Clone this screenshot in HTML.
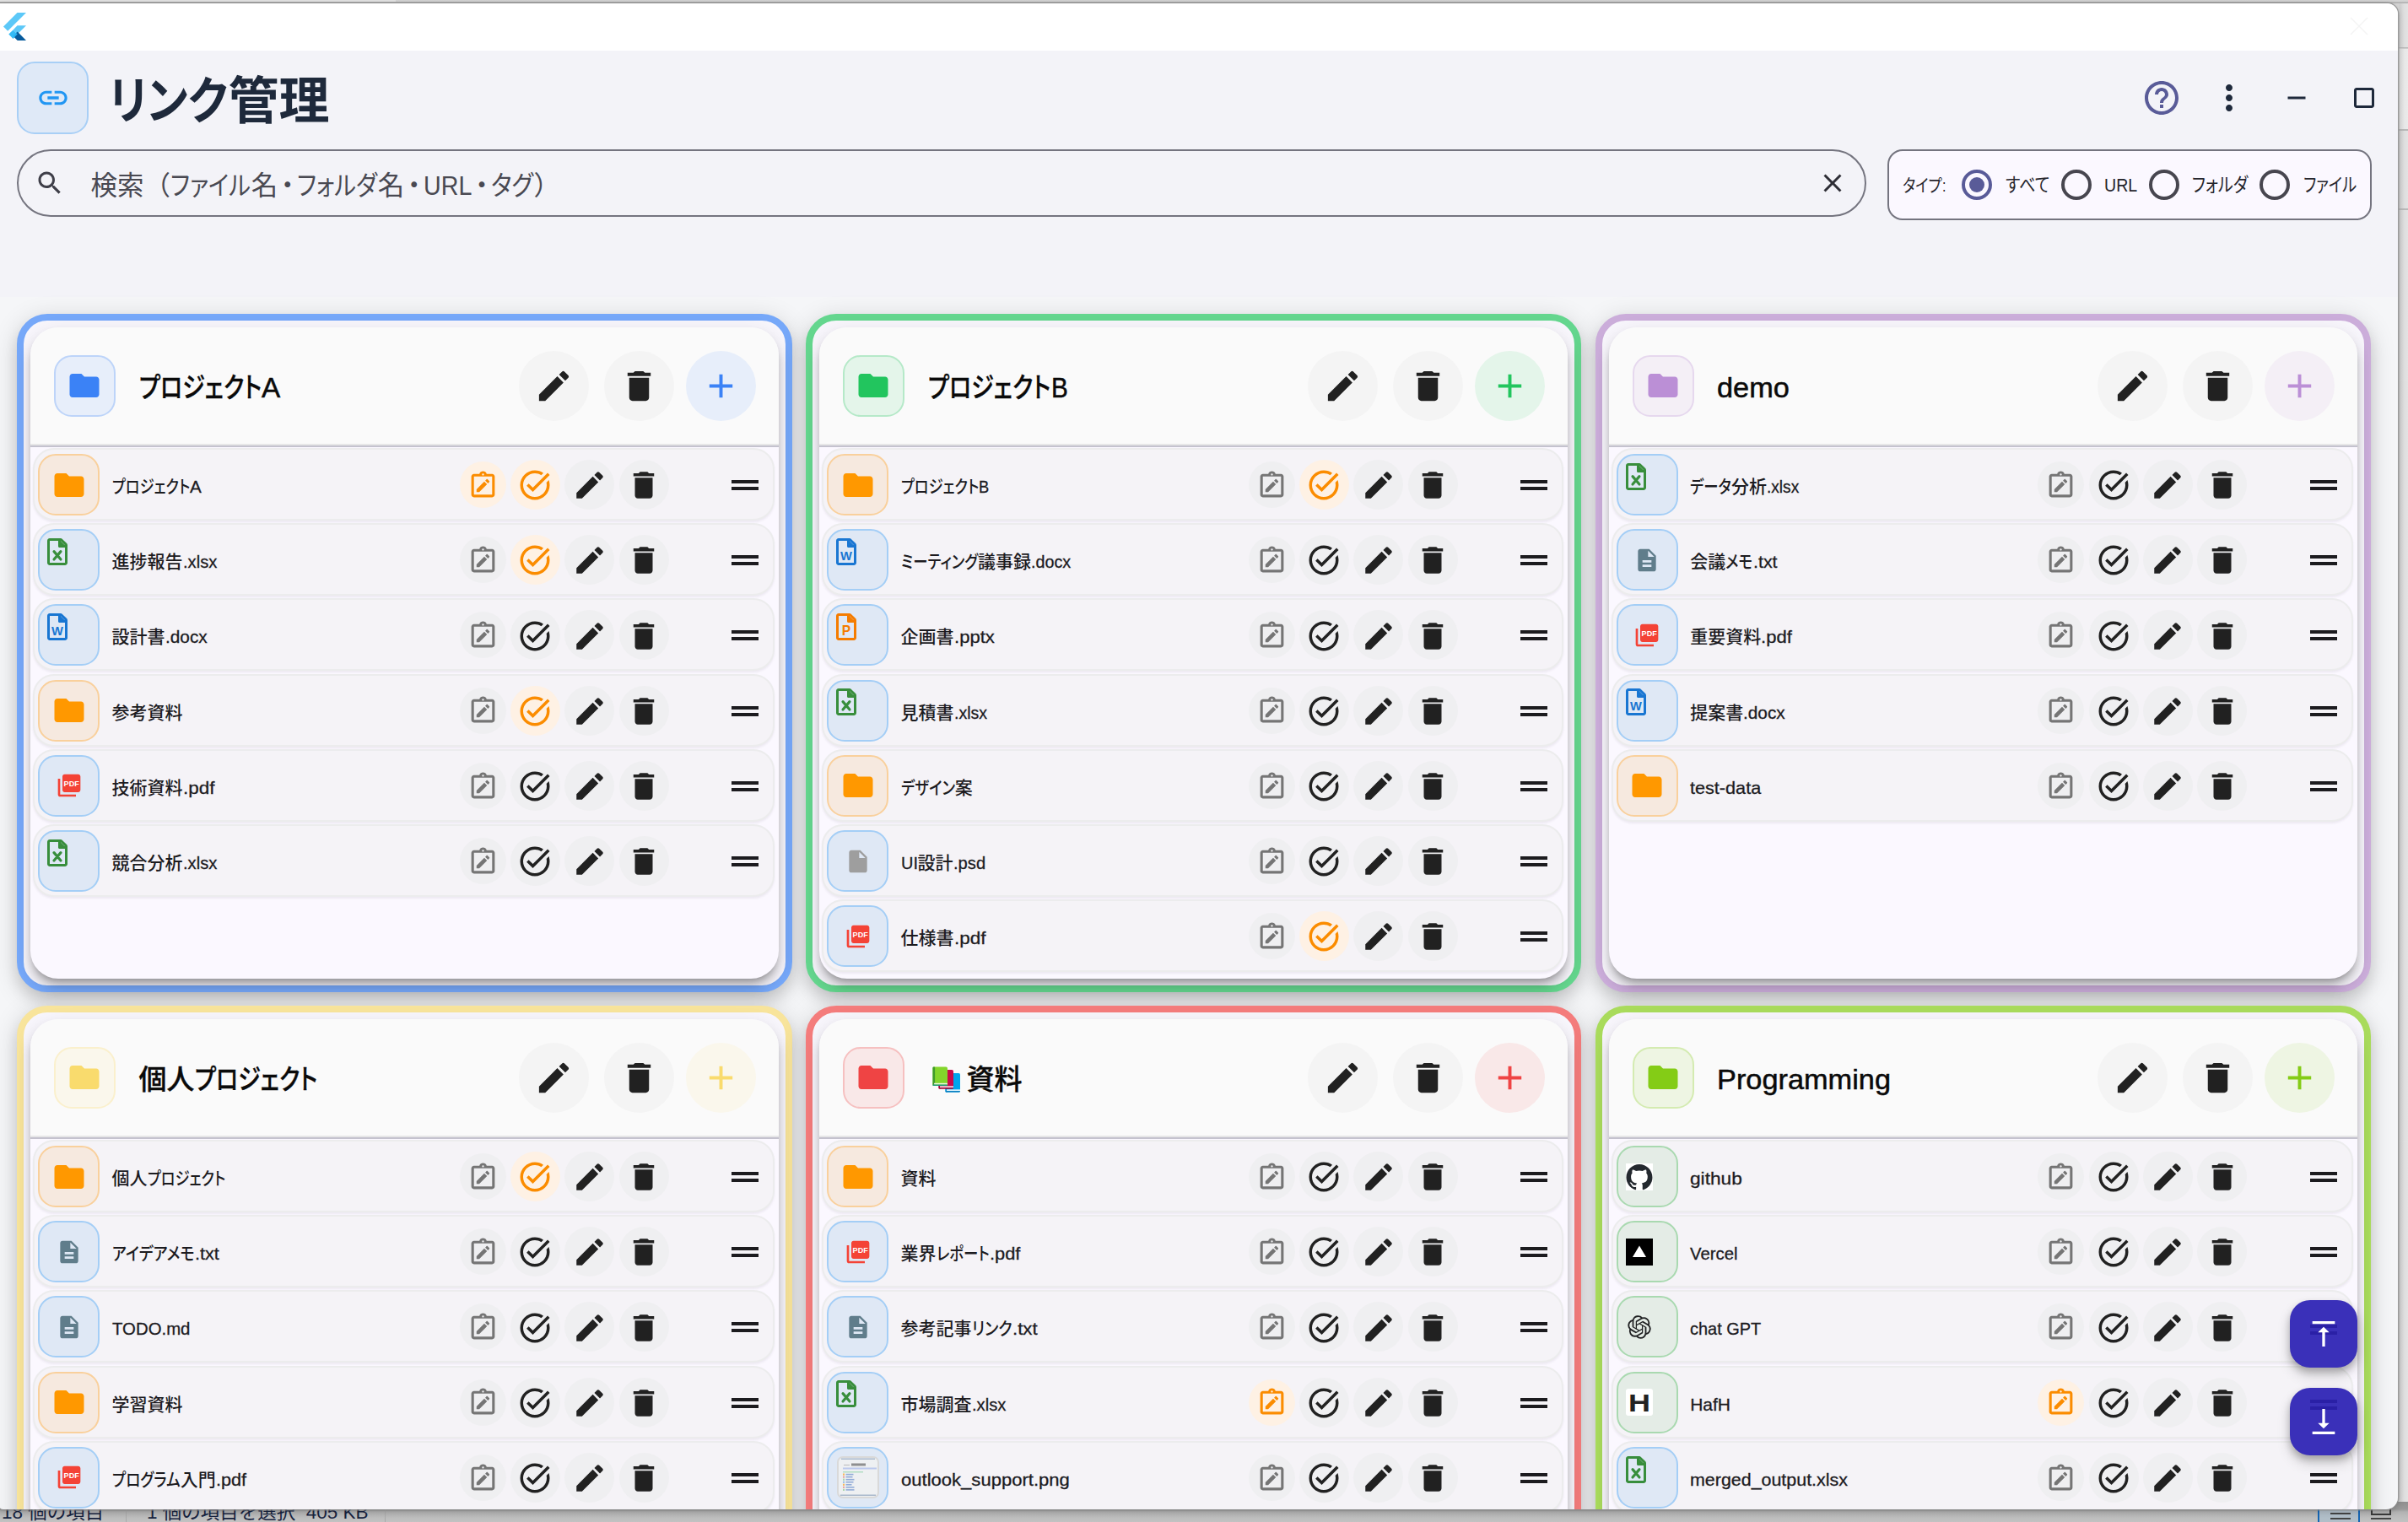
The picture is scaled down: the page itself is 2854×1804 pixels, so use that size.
<!DOCTYPE html><html lang="ja"><head><meta charset="utf-8"><title>リンク管理</title><style>
*{box-sizing:border-box;margin:0;padding:0}
html,body{width:2854px;height:1804px;overflow:hidden}
body{position:relative;background:#cfcfcf;font-family:"Liberation Sans","Noto Sans CJK JP",sans-serif;color:#1c1b1f}
.ab{position:absolute;display:block}
.k,.l{display:inline-block;transform-origin:0 50%;white-space:nowrap}
.k{font-feature-settings:"palt"}
.d{display:inline-block;text-align:center;font-feature-settings:"palt"}
#desk{position:absolute;left:0;top:0;width:2854px;height:1804px;background:linear-gradient(90deg,#d6d6d6 0,#d6d6d6 2843px,#cfcfcf 2844px,#dedede 2849px,#e3e3e3 2854px)}
#desk i{position:absolute;left:2843px;width:11px;height:1.5px;background:#b9b9b9}
#desk b{position:absolute;left:2843px;top:57px;width:11px;height:96px;background:rgba(255,255,255,.28)}
#desk .top{position:absolute;left:0;top:0;width:2854px;height:4px;background:linear-gradient(#d4d4d4 0,#d2d2d2 2px,#a8a8a8 3px,#b6b6b6 4px)}
#desk .top:before{content:"";position:absolute;left:0;top:0;width:469px;height:2.4px;background:#e3e3e3}
#sb{position:absolute;left:0;top:1780px;width:2854px;height:24px;background:linear-gradient(#8f8f8f 0,#9a9a9a 9px,#b2b2b2 12px,#bcbcbc 18px,#c2c2c2 24px);font-size:22.5px;line-height:24px;color:#17233f;white-space:nowrap}
#sb span{position:absolute;top:1px}
#sb i{position:absolute;top:0;width:1px;height:24px;background:#a9a9a9}
#win{position:absolute;left:-2px;top:3.5px;width:2844.2px;height:1785.5px;border-radius:0 13px 14px 6px;overflow:hidden;background:#f5f6f8;box-shadow:0 0 0 1.5px rgba(140,140,140,.75),0 2px 9px rgba(0,0,0,.2)}
#win>*{margin-left:2px}
#tb{position:absolute;left:0;top:0;width:2846px;height:56.5px;background:#fff}
#app{position:absolute;left:0;top:56.5px;width:2846px;height:292px;background:#f3f3f8}
#pg{position:absolute;left:0;top:-3.5px;width:2854px;height:1804px}
.lb{position:absolute;left:20px;top:73px;width:85px;height:86px;border-radius:21px;background:#dfe9f7;border:2px solid #a8cff6}
.tt{position:absolute;left:128.5px;top:78.5px;height:84px;line-height:84px;font-size:60px;font-weight:700;color:#1e293b;white-space:nowrap}
.sr{position:absolute;left:19.50px;top:177px;width:2192px;height:80px;border-radius:40px;border:2px solid #74747f}
.ph{position:absolute;left:107.5px;top:180.5px;height:78px;line-height:78px;font-size:31.50px;color:#494952;white-space:nowrap;font-weight:400}
.rg{position:absolute;left:2236.50px;top:177px;width:574px;height:84px;border-radius:18px;border:2px solid #74747f;background:#fbf8ff}
.rt{position:absolute;top:200px;height:40px;line-height:40px;font-size:22.50px;color:#25252c;white-space:nowrap}
.rd{position:absolute;top:201.30px;width:36px;height:36px;border-radius:50%;border:4px solid #47464f}
.rd.on{border-color:#595b98}
.rd.on:after{content:"";position:absolute;left:5px;top:5px;width:18px;height:18px;border-radius:50%;background:#595b98}
.card{position:absolute;width:919px;border:8px solid;border-radius:36px;background:#f8f6fc;box-shadow:0 6px 30px rgba(0,0,0,.155),0 11px 16px rgba(0,0,0,.10)}
.inner{position:absolute;left:8px;top:8px;width:887px;border-radius:33px;background:#fbf8ff;overflow:visible;box-shadow:0 7px 8px -4px rgba(0,0,0,.29),0 12px 15px 0 rgba(0,0,0,.15),0 4px 20px 2px rgba(0,0,0,.07)}
.hd{position:absolute;left:0;top:0;width:887px;height:140px;border-radius:33px 33px 0 0;background:#fafafa}
.dv{position:absolute;left:0;top:138px;width:887px;height:4px;background:linear-gradient(#eaeaea 0,#e4e4e5 40%,#c4c2ce 52%,#c4c2ce 88%,#e8e6ee 100%)}
.hb{position:absolute;width:73px;height:73px;border-radius:21px;border:2px solid}
.ht{position:absolute;height:60px;line-height:60px;font-size:33px;font-weight:500;color:#0a0a0a;-webkit-text-stroke:.35px #0a0a0a;white-space:nowrap}
.bk{display:inline-block;width:46px}
.ht .l{-webkit-text-stroke:.5px #0a0a0a}
.rl .l{-webkit-text-stroke:.3px #1c1b1f}
.cb{position:absolute;border-radius:50%}
.row{position:absolute;width:879px;height:86px;border-radius:25px;background:#f5f3f7;border:2px solid #ececed;box-shadow:0 2px 2.5px rgba(40,30,60,.065)}
.ib{position:absolute;width:73px;height:73px;border-radius:21px;border:2px solid}
.ib.fo{background:#f6e9df;border-color:#f9d09c}
.ib.fi{background:#dfe8f5;border-color:#a4cef6}
.ib.ur{background:#e4ece6;border-color:#a9d9b0}
.rl{position:absolute;height:86px;line-height:92px;font-size:21px;font-weight:500;color:#1c1b1f;white-space:nowrap}
.fab{position:absolute;left:2714px;width:80px;height:80px;border-radius:24px;background:#3a30b9;box-shadow:0 5px 8px rgba(0,0,0,.22),0 9px 16px rgba(0,0,0,.16)}
</style></head><body>
<div id="desk"><div class="top"></div><i style="top:56px"></i><i style="top:153px"></i><i style="top:247px"></i><b></b></div>
<div id="sb"><span style="left:2px">18 個の項目</span><i style="left:149px"></i><span style="left:174px">1 個の項目を選択&nbsp;&nbsp;405 KB</span><i style="left:456px"></i><b style="position:absolute;left:2747px;top:8px;width:50px;height:16px;background:#b1bec8;border-left:2px solid #1566b5;border-right:2px solid #1566b5"></b><b style="position:absolute;left:2762px;top:13px;width:24px;height:2px;background:#444"></b><b style="position:absolute;left:2762px;top:19px;width:24px;height:2px;background:#444"></b><b style="position:absolute;left:2810px;top:0;width:24px;height:16px;border:2.50px solid #3a3a3a;border-top:0"></b><b style="position:absolute;left:2810px;top:19px;width:24px;height:2px;background:#444"></b></div>
<div id="win"><div id="tb"></div><div id="app"></div><div id="pg">
<svg class="ab" style="left:4px;top:15px" width="27" height="33" viewBox="0 0 27 33"><path fill="#5cc8f8" d="M0 16.50L16.50 0H27L5.20 21.80z"/><path fill="#5cc8f8" d="M16.50 15.30H27L16.70 25.60l-5.20-5.20z"/><path fill="#075b9d" d="M11.50 27.70l5.20 5.30H27l-10.30-10.40z"/><path fill="#29b6f6" d="M11.50 20.40l5.20 5.20-5.20 5.30-5.20-5.30z" opacity=".95"/></svg>
<div class="lb"></div><svg class="ab" style="left:42.80px;top:96.00px;" width="40" height="40" viewBox="0 0 24 24"><path fill="#2196f3" d="M3.9 12c0-1.71 1.39-3.1 3.1-3.1h4V7H7c-2.76 0-5 2.24-5 5s2.24 5 5 5h4v-1.9H7c-1.71 0-3.1-1.39-3.1-3.1zM8 13h8v-2H8v2zm9-6h-4v1.9h4c1.71 0 3.1 1.39 3.1 3.1s-1.39 3.1-3.1 3.1h-4V17h4c2.76 0 5-2.24 5-5s-2.24-5-5-5z"/></svg>
<div class="tt"><span class="k" style="width:142.00px;transform:scaleX(0.88)">リンク</span>管理</div>
<svg class="ab" style="left:2538.00px;top:92.00px;" width="48" height="48" viewBox="0 0 24 24"><path fill="#595b98" d="M11 18h2v-2h-2v2zm1-16C6.48 2 2 6.48 2 12s4.48 10 10 10 10-4.48 10-10S17.52 2 12 2zm0 18c-4.41 0-8-3.59-8-8s3.59-8 8-8 8 3.59 8 8-3.59 8-8 8zm0-14c-2.21 0-4 1.79-4 4h2c0-1.1.9-2 2-2s2 .9 2 2c0 2-3 1.75-3 5h2c0-2.25 3-2.5 3-5 0-2.21-1.79-4-4-4z"/></svg><svg class="ab" style="left:2618.00px;top:92.00px;" width="48" height="48" viewBox="0 0 24 24"><path fill="#1e293b" d="M12 8c1.1 0 2-.9 2-2s-.9-2-2-2-2 .9-2 2 .9 2 2 2zm0 2c-1.1 0-2 .9-2 2s.9 2 2 2 2-.9 2-2-.9-2-2-2zm0 6c-1.1 0-2 .9-2 2s.9 2 2 2 2-.9 2-2-.9-2-2-2z"/></svg><svg class="ab" style="left:2704.20px;top:98.00px;" width="36" height="36" viewBox="0 0 24 24"><path fill="#1e293b" d="M19 13H5v-2h14v2z"/></svg><svg class="ab" style="left:2784.20px;top:98.00px;" width="36" height="36" viewBox="0 0 24 24"><path fill="#1e293b" d="M18 4H6c-1.1 0-2 .9-2 2v12c0 1.1.9 2 2 2h12c1.1 0 2-.9 2-2V6c0-1.1-.9-2-2-2zm0 14H6V6h12v12z"/></svg>
<svg class="ab" style="left:2785px;top:20px" width="22" height="22" viewBox="0 0 22 22"><path d="M1 1L21 21M21 1L1 21" stroke="#f4f4f4" stroke-width="1.50"/></svg>
<div class="sr"></div><svg class="ab" style="left:40.70px;top:198.70px;" width="36" height="36" viewBox="0 0 24 24"><path fill="#3e3e48" d="M15.5 14h-.79l-.28-.27C15.41 12.59 16 11.11 16 9.5 16 5.91 13.09 3 9.5 3S3 5.91 3 9.5 5.91 16 9.5 16c1.61 0 3.09-.59 4.23-1.57l.27.28v.79l5 4.99L20.49 19l-4.99-5zm-6 0C7.01 14 5 11.99 5 9.5S7.01 5 9.5 5 14 7.01 14 9.5 11.99 14 9.5 14z"/></svg><svg class="ab" style="left:2154.00px;top:198.70px;" width="36" height="36" viewBox="0 0 24 24"><path fill="#2e2e36" d="M19 6.41L17.59 5 12 10.59 6.41 5 5 6.41 10.59 12 5 17.59 6.41 19 12 13.41 17.59 19 19 17.59 13.41 12z"/></svg>
<div class="ph">検索（<span class="k" style="width:95.67px;transform:scaleX(0.87)">ファイル</span>名<span class="d" style="width:22.90px">・</span><span class="k" style="width:95.67px;transform:scaleX(0.87)">フォルダ</span>名<span class="d" style="width:22.90px">・</span><span class="l" style="width:57.43px;transform:scaleX(0.91)">URL</span><span class="d" style="width:22.90px">・</span><span class="k" style="width:50.04px;transform:scaleX(0.89)">タグ</span>）</div>
<div class="rg"></div>
<div class="rt" style="left:2255px;font-size:21px"><span class="k" style="width:47.05px;transform:scaleX(0.83)">タイプ</span><span class="l" style="width:4.45px;transform:scaleX(0.76)">:</span></div>
<div class="rd on" style="left:2325px"></div><div class="rt" style="left:2377px"><span class="k" style="width:52.50px;transform:scaleX(0.85)">すべて</span></div>
<div class="rd" style="left:2442.7px"></div><div class="rt" style="left:2494px"><span class="l" style="width:39.50px;transform:scaleX(0.87)">URL</span></div>
<div class="rd" style="left:2547px"></div><div class="rt" style="left:2598px"><span class="k" style="width:67.00px;transform:scaleX(0.85)">フォルダ</span></div>
<div class="rd" style="left:2678.3px"></div><div class="rt" style="left:2730px"><span class="k" style="width:63.50px;transform:scaleX(0.81)">ファイル</span></div>
<div class="card" style="left:20px;top:372px;height:804px;border-color:#76a8f9"><div class="inner" style="height:772px"><div class="hd"></div><div class="dv"></div></div></div>
<div class="hb" style="left:64px;top:420.5px;background:#e7eefa;border-color:#bdd4f9"></div>
<svg class="ab" style="left:79.30px;top:436.00px;" width="42" height="42" viewBox="0 0 24 24"><path fill="#3b82f6" d="M10 4H4c-1.1 0-1.99.9-1.99 2L2 18c0 1.1.9 2 2 2h16c1.1 0 2-.9 2-2V8c0-1.1-.9-2-2-2h-8l-2-2z"/></svg>
<div class="ht" style="left:164.5px;top:429.5px"><span class="k" style="width:145.55px;transform:scaleX(0.82)">プロジェクト</span><span class="l" style="width:22.45px;transform:scaleX(1.01)">A</span></div>
<div class="cb" style="left:615.1px;top:415.5px;width:83px;height:83px;background:#f4f4f4"></div>
<svg class="ab" style="left:633.10px;top:433.50px;" width="47" height="47" viewBox="0 0 24 24"><path fill="#212121" d="M3 17.25V21h3.75L17.81 9.94l-3.75-3.75L3 17.25zM20.71 7.04c.39-.39.39-1.02 0-1.41l-2.34-2.34c-.39-.39-1.02-.39-1.41 0l-1.83 1.83 3.75 3.75 1.83-1.83z"/></svg>
<div class="cb" style="left:716.1px;top:415.5px;width:83px;height:83px;background:#f4f4f4"></div>
<svg class="ab" style="left:734.10px;top:433.50px;" width="47" height="47" viewBox="0 0 24 24"><path fill="#212121" d="M6 19c0 1.1.9 2 2 2h8c1.1 0 2-.9 2-2V7H6v12zM19 4h-3.5l-1-1h-5l-1 1H5v2h14V4z"/></svg>
<div class="cb" style="left:812.8px;top:415.5px;width:83px;height:83px;background:#e7eefa"></div>
<svg class="ab" style="left:830.80px;top:433.50px;" width="47" height="47" viewBox="0 0 24 24"><path fill="#3b82f6" d="M19 13h-6v6h-2v-6H5v-2h6V5h2v6h6v2z"/></svg>
<div class="row" style="left:39px;top:531.0px"></div>
<div class="ib fo" style="left:45px;top:538.0px"></div>
<svg class="ab" style="left:60.50px;top:553.50px;" width="42" height="42" viewBox="0 0 24 24"><path fill="#ff9800" d="M10 4H4c-1.1 0-1.99.9-1.99 2L2 18c0 1.1.9 2 2 2h16c1.1 0 2-.9 2-2V8c0-1.1-.9-2-2-2h-8l-2-2z"/></svg>
<div class="rl" style="left:132.5px;top:531.0px"><span class="k" style="width:92.75px;transform:scaleX(0.82)">プロジェクト</span><span class="l" style="width:13.75px;transform:scaleX(0.98)">A</span></div>
<div class="cb" style="left:544.5px;top:546.9px;width:55px;height:55px;background:#fef1e4"></div>
<svg class="ab" style="left:553.50px;top:556.70px;" width="37" height="37" viewBox="0 0 24 24"><path fill="#fb8c00" d="M19 3h-4.18C14.40 1.84 13.30 1 12 1S9.60 1.84 9.18 3H5c-1.10 0-2 .900-2 2v14c0 1.10.900 2 2 2h14c1.10 0 2-.900 2-2V5c0-1.10-.900-2-2-2zm-7-.250c.410 0 .750.34.750.75s-.340.75-.750.75-.750-.340-.750-.750.34-.750.75-.750zM19 19H5V5h14v14zM15.08 11.03l-2.12-2.12L7 14.86V17h2.10l5.98-5.97zM16.85 9.27c.200-.200.20-.510 0-.710l-1.41-1.41c-.200-.200-.510-.200-.710 0l-1.06 1.06 2.12 2.12 1.06-1.06z"/></svg>
<div class="cb" style="left:604.8px;top:544.9px;width:59px;height:59px;background:#fef1e4"></div>
<svg class="ab" style="left:613.30px;top:554.20px;" width="42" height="42" viewBox="0 0 24 24"><path fill="#fb8c00" d="M22 5.18L10.59 16.6l-4.24-4.24 1.41-1.41 2.83 2.83 10-10L22 5.18zM19.79 10.22c.13.57.21 1.17.21 1.78 0 4.42-3.58 8-8 8s-8-3.58-8-8 3.58-8 8-8c1.58 0 3.04.46 4.28 1.25l1.44-1.44C16.1 2.67 14.13 2 12 2 6.48 2 2 6.48 2 12s4.48 10 10 10 10-4.48 10-10c0-1.19-.22-2.33-.6-3.39l-1.61 1.61z"/></svg>
<div class="cb" style="left:669.1px;top:544.9px;width:59px;height:59px;background:#efeff1"></div>
<svg class="ab" style="left:677.60px;top:554.20px;" width="42" height="42" viewBox="0 0 24 24"><path fill="#212121" d="M3 17.25V21h3.75L17.81 9.94l-3.75-3.75L3 17.25zM20.71 7.04c.39-.39.39-1.02 0-1.41l-2.34-2.34c-.39-.39-1.02-.39-1.41 0l-1.83 1.83 3.75 3.75 1.83-1.83z"/></svg>
<div class="cb" style="left:733.5px;top:544.9px;width:59px;height:59px;background:#efeff1"></div>
<svg class="ab" style="left:742.00px;top:554.20px;" width="42" height="42" viewBox="0 0 24 24"><path fill="#212121" d="M6 19c0 1.1.9 2 2 2h8c1.1 0 2-.9 2-2V7H6v12zM19 4h-3.5l-1-1h-5l-1 1H5v2h14V4z"/></svg>
<svg class="ab" style="left:859.00px;top:551.00px;" width="48" height="48" viewBox="0 0 24 24"><path fill="#1c1b1f" d="M20 9H4v2h16V9zM4 15h16v-2H4v2z"/></svg>
<div class="row" style="left:39px;top:620.2px"></div>
<div class="ib fi" style="left:45px;top:627.2px"></div>
<svg class="ab" style="left:56px;top:637.9px" width="24" height="32" viewBox="0 0 384 512"><path fill="#388e3c" d="M369.90 97.90L286 14C277 5 264.80-.100 252.10-.100H48C21.50 0 0 21.50 0 48v416c0 26.50 21.50 48 48 48h288c26.50 0 48-21.50 48-48V131.90c0-12.70-5.10-25-14.10-34zM332.10 128H256V51.90l76.10 76.10zM48 464V48h160v104c0 13.30 10.70 24 24 24h104v288H48z"/><path fill="#388e3c" d="M240 40L344 144H240z"/><path d="M128 250 L256 400 M256 250 L128 400" stroke="#388e3c" stroke-width="50" stroke-linecap="round" fill="none"/></svg>
<div class="rl" style="left:132.5px;top:620.2px">進捗報告<span class="l" style="width:40.50px;transform:scaleX(0.96)">.xlsx</span></div>
<div class="cb" style="left:544.5px;top:636.1px;width:55px;height:55px;background:#efeff1"></div>
<svg class="ab" style="left:553.50px;top:645.90px;" width="37" height="37" viewBox="0 0 24 24"><path fill="#757575" d="M19 3h-4.18C14.40 1.84 13.30 1 12 1S9.60 1.84 9.18 3H5c-1.10 0-2 .900-2 2v14c0 1.10.900 2 2 2h14c1.10 0 2-.900 2-2V5c0-1.10-.900-2-2-2zm-7-.250c.410 0 .750.34.750.75s-.340.75-.750.75-.750-.340-.750-.750.34-.750.75-.750zM19 19H5V5h14v14zM15.08 11.03l-2.12-2.12L7 14.86V17h2.10l5.98-5.97zM16.85 9.27c.200-.200.20-.510 0-.710l-1.41-1.41c-.200-.200-.510-.200-.710 0l-1.06 1.06 2.12 2.12 1.06-1.06z"/></svg>
<div class="cb" style="left:604.8px;top:634.1px;width:59px;height:59px;background:#fef1e4"></div>
<svg class="ab" style="left:613.30px;top:643.40px;" width="42" height="42" viewBox="0 0 24 24"><path fill="#fb8c00" d="M22 5.18L10.59 16.6l-4.24-4.24 1.41-1.41 2.83 2.83 10-10L22 5.18zM19.79 10.22c.13.57.21 1.17.21 1.78 0 4.42-3.58 8-8 8s-8-3.58-8-8 3.58-8 8-8c1.58 0 3.04.46 4.28 1.25l1.44-1.44C16.1 2.67 14.13 2 12 2 6.48 2 2 6.48 2 12s4.48 10 10 10 10-4.48 10-10c0-1.19-.22-2.33-.6-3.39l-1.61 1.61z"/></svg>
<div class="cb" style="left:669.1px;top:634.1px;width:59px;height:59px;background:#efeff1"></div>
<svg class="ab" style="left:677.60px;top:643.40px;" width="42" height="42" viewBox="0 0 24 24"><path fill="#212121" d="M3 17.25V21h3.75L17.81 9.94l-3.75-3.75L3 17.25zM20.71 7.04c.39-.39.39-1.02 0-1.41l-2.34-2.34c-.39-.39-1.02-.39-1.41 0l-1.83 1.83 3.75 3.75 1.83-1.83z"/></svg>
<div class="cb" style="left:733.5px;top:634.1px;width:59px;height:59px;background:#efeff1"></div>
<svg class="ab" style="left:742.00px;top:643.40px;" width="42" height="42" viewBox="0 0 24 24"><path fill="#212121" d="M6 19c0 1.1.9 2 2 2h8c1.1 0 2-.9 2-2V7H6v12zM19 4h-3.5l-1-1h-5l-1 1H5v2h14V4z"/></svg>
<svg class="ab" style="left:859.00px;top:640.20px;" width="48" height="48" viewBox="0 0 24 24"><path fill="#1c1b1f" d="M20 9H4v2h16V9zM4 15h16v-2H4v2z"/></svg>
<div class="row" style="left:39px;top:709.4px"></div>
<div class="ib fi" style="left:45px;top:716.4px"></div>
<svg class="ab" style="left:56px;top:727.1px" width="24" height="32" viewBox="0 0 384 512"><path fill="#1976d2" d="M369.90 97.90L286 14C277 5 264.80-.100 252.10-.100H48C21.50 0 0 21.50 0 48v416c0 26.50 21.50 48 48 48h288c26.50 0 48-21.50 48-48V131.90c0-12.70-5.10-25-14.10-34zM332.10 128H256V51.90l76.10 76.10zM48 464V48h160v104c0 13.30 10.70 24 24 24h104v288H48z"/><path fill="#1976d2" d="M240 40L344 144H240z"/><text x="192" y="408" text-anchor="middle" font-family="Liberation Sans, sans-serif" font-weight="bold" font-size="235" fill="#1976d2">W</text></svg>
<div class="rl" style="left:132.5px;top:709.4px">設計書<span class="l" style="width:50.20px;transform:scaleX(0.99)">.docx</span></div>
<div class="cb" style="left:544.5px;top:725.3px;width:55px;height:55px;background:#efeff1"></div>
<svg class="ab" style="left:553.50px;top:735.10px;" width="37" height="37" viewBox="0 0 24 24"><path fill="#757575" d="M19 3h-4.18C14.40 1.84 13.30 1 12 1S9.60 1.84 9.18 3H5c-1.10 0-2 .900-2 2v14c0 1.10.900 2 2 2h14c1.10 0 2-.900 2-2V5c0-1.10-.900-2-2-2zm-7-.250c.410 0 .750.34.750.75s-.340.75-.750.75-.750-.340-.750-.750.34-.750.75-.750zM19 19H5V5h14v14zM15.08 11.03l-2.12-2.12L7 14.86V17h2.10l5.98-5.97zM16.85 9.27c.200-.200.20-.510 0-.710l-1.41-1.41c-.200-.200-.510-.200-.710 0l-1.06 1.06 2.12 2.12 1.06-1.06z"/></svg>
<div class="cb" style="left:604.8px;top:723.3px;width:59px;height:59px;background:#efeff1"></div>
<svg class="ab" style="left:613.30px;top:732.60px;" width="42" height="42" viewBox="0 0 24 24"><path fill="#212121" d="M22 5.18L10.59 16.6l-4.24-4.24 1.41-1.41 2.83 2.83 10-10L22 5.18zM19.79 10.22c.13.57.21 1.17.21 1.78 0 4.42-3.58 8-8 8s-8-3.58-8-8 3.58-8 8-8c1.58 0 3.04.46 4.28 1.25l1.44-1.44C16.1 2.67 14.13 2 12 2 6.48 2 2 6.48 2 12s4.48 10 10 10 10-4.48 10-10c0-1.19-.22-2.33-.6-3.39l-1.61 1.61z"/></svg>
<div class="cb" style="left:669.1px;top:723.3px;width:59px;height:59px;background:#efeff1"></div>
<svg class="ab" style="left:677.60px;top:732.60px;" width="42" height="42" viewBox="0 0 24 24"><path fill="#212121" d="M3 17.25V21h3.75L17.81 9.94l-3.75-3.75L3 17.25zM20.71 7.04c.39-.39.39-1.02 0-1.41l-2.34-2.34c-.39-.39-1.02-.39-1.41 0l-1.83 1.83 3.75 3.75 1.83-1.83z"/></svg>
<div class="cb" style="left:733.5px;top:723.3px;width:59px;height:59px;background:#efeff1"></div>
<svg class="ab" style="left:742.00px;top:732.60px;" width="42" height="42" viewBox="0 0 24 24"><path fill="#212121" d="M6 19c0 1.1.9 2 2 2h8c1.1 0 2-.9 2-2V7H6v12zM19 4h-3.5l-1-1h-5l-1 1H5v2h14V4z"/></svg>
<svg class="ab" style="left:859.00px;top:729.40px;" width="48" height="48" viewBox="0 0 24 24"><path fill="#1c1b1f" d="M20 9H4v2h16V9zM4 15h16v-2H4v2z"/></svg>
<div class="row" style="left:39px;top:798.6px"></div>
<div class="ib fo" style="left:45px;top:805.6px"></div>
<svg class="ab" style="left:60.50px;top:821.10px;" width="42" height="42" viewBox="0 0 24 24"><path fill="#ff9800" d="M10 4H4c-1.1 0-1.99.9-1.99 2L2 18c0 1.1.9 2 2 2h16c1.1 0 2-.9 2-2V8c0-1.1-.9-2-2-2h-8l-2-2z"/></svg>
<div class="rl" style="left:132.5px;top:798.6px">参考資料</div>
<div class="cb" style="left:544.5px;top:814.5px;width:55px;height:55px;background:#efeff1"></div>
<svg class="ab" style="left:553.50px;top:824.30px;" width="37" height="37" viewBox="0 0 24 24"><path fill="#757575" d="M19 3h-4.18C14.40 1.84 13.30 1 12 1S9.60 1.84 9.18 3H5c-1.10 0-2 .900-2 2v14c0 1.10.900 2 2 2h14c1.10 0 2-.900 2-2V5c0-1.10-.900-2-2-2zm-7-.250c.410 0 .750.34.750.75s-.340.75-.750.75-.750-.340-.750-.750.34-.750.75-.750zM19 19H5V5h14v14zM15.08 11.03l-2.12-2.12L7 14.86V17h2.10l5.98-5.97zM16.85 9.27c.200-.200.20-.510 0-.710l-1.41-1.41c-.200-.200-.510-.200-.710 0l-1.06 1.06 2.12 2.12 1.06-1.06z"/></svg>
<div class="cb" style="left:604.8px;top:812.5px;width:59px;height:59px;background:#fef1e4"></div>
<svg class="ab" style="left:613.30px;top:821.80px;" width="42" height="42" viewBox="0 0 24 24"><path fill="#fb8c00" d="M22 5.18L10.59 16.6l-4.24-4.24 1.41-1.41 2.83 2.83 10-10L22 5.18zM19.79 10.22c.13.57.21 1.17.21 1.78 0 4.42-3.58 8-8 8s-8-3.58-8-8 3.58-8 8-8c1.58 0 3.04.46 4.28 1.25l1.44-1.44C16.1 2.67 14.13 2 12 2 6.48 2 2 6.48 2 12s4.48 10 10 10 10-4.48 10-10c0-1.19-.22-2.33-.6-3.39l-1.61 1.61z"/></svg>
<div class="cb" style="left:669.1px;top:812.5px;width:59px;height:59px;background:#efeff1"></div>
<svg class="ab" style="left:677.60px;top:821.80px;" width="42" height="42" viewBox="0 0 24 24"><path fill="#212121" d="M3 17.25V21h3.75L17.81 9.94l-3.75-3.75L3 17.25zM20.71 7.04c.39-.39.39-1.02 0-1.41l-2.34-2.34c-.39-.39-1.02-.39-1.41 0l-1.83 1.83 3.75 3.75 1.83-1.83z"/></svg>
<div class="cb" style="left:733.5px;top:812.5px;width:59px;height:59px;background:#efeff1"></div>
<svg class="ab" style="left:742.00px;top:821.80px;" width="42" height="42" viewBox="0 0 24 24"><path fill="#212121" d="M6 19c0 1.1.9 2 2 2h8c1.1 0 2-.9 2-2V7H6v12zM19 4h-3.5l-1-1h-5l-1 1H5v2h14V4z"/></svg>
<svg class="ab" style="left:859.00px;top:818.60px;" width="48" height="48" viewBox="0 0 24 24"><path fill="#1c1b1f" d="M20 9H4v2h16V9zM4 15h16v-2H4v2z"/></svg>
<div class="row" style="left:39px;top:887.8px"></div>
<div class="ib fi" style="left:45px;top:894.8px"></div>
<svg class="ab" style="left:65.5px;top:915.3px" width="32" height="32" viewBox="0 0 24 24"><path fill="#f44336" d="M20 2H8c-1.10 0-2 .900-2 2v12c0 1.10.900 2 2 2h12c1.10 0 2-.900 2-2V4c0-1.10-.900-2-2-2zM4 6H2v14c0 1.10.900 2 2 2h14v-2H4V6z"/><text x="14" y="13" text-anchor="middle" font-family="Liberation Sans, sans-serif" font-weight="bold" font-size="7.2" fill="#fff" textLength="13.6" lengthAdjust="spacingAndGlyphs">PDF</text></svg>
<div class="rl" style="left:132.5px;top:887.8px">技術資料<span class="l" style="width:37.50px;transform:scaleX(1.07)">.pdf</span></div>
<div class="cb" style="left:544.5px;top:903.7px;width:55px;height:55px;background:#efeff1"></div>
<svg class="ab" style="left:553.50px;top:913.50px;" width="37" height="37" viewBox="0 0 24 24"><path fill="#757575" d="M19 3h-4.18C14.40 1.84 13.30 1 12 1S9.60 1.84 9.18 3H5c-1.10 0-2 .900-2 2v14c0 1.10.900 2 2 2h14c1.10 0 2-.900 2-2V5c0-1.10-.900-2-2-2zm-7-.250c.410 0 .750.34.750.75s-.340.75-.750.75-.750-.340-.750-.750.34-.750.75-.750zM19 19H5V5h14v14zM15.08 11.03l-2.12-2.12L7 14.86V17h2.10l5.98-5.97zM16.85 9.27c.200-.200.20-.510 0-.710l-1.41-1.41c-.200-.200-.510-.200-.710 0l-1.06 1.06 2.12 2.12 1.06-1.06z"/></svg>
<div class="cb" style="left:604.8px;top:901.7px;width:59px;height:59px;background:#efeff1"></div>
<svg class="ab" style="left:613.30px;top:911.00px;" width="42" height="42" viewBox="0 0 24 24"><path fill="#212121" d="M22 5.18L10.59 16.6l-4.24-4.24 1.41-1.41 2.83 2.83 10-10L22 5.18zM19.79 10.22c.13.57.21 1.17.21 1.78 0 4.42-3.58 8-8 8s-8-3.58-8-8 3.58-8 8-8c1.58 0 3.04.46 4.28 1.25l1.44-1.44C16.1 2.67 14.13 2 12 2 6.48 2 2 6.48 2 12s4.48 10 10 10 10-4.48 10-10c0-1.19-.22-2.33-.6-3.39l-1.61 1.61z"/></svg>
<div class="cb" style="left:669.1px;top:901.7px;width:59px;height:59px;background:#efeff1"></div>
<svg class="ab" style="left:677.60px;top:911.00px;" width="42" height="42" viewBox="0 0 24 24"><path fill="#212121" d="M3 17.25V21h3.75L17.81 9.94l-3.75-3.75L3 17.25zM20.71 7.04c.39-.39.39-1.02 0-1.41l-2.34-2.34c-.39-.39-1.02-.39-1.41 0l-1.83 1.83 3.75 3.75 1.83-1.83z"/></svg>
<div class="cb" style="left:733.5px;top:901.7px;width:59px;height:59px;background:#efeff1"></div>
<svg class="ab" style="left:742.00px;top:911.00px;" width="42" height="42" viewBox="0 0 24 24"><path fill="#212121" d="M6 19c0 1.1.9 2 2 2h8c1.1 0 2-.9 2-2V7H6v12zM19 4h-3.5l-1-1h-5l-1 1H5v2h14V4z"/></svg>
<svg class="ab" style="left:859.00px;top:907.80px;" width="48" height="48" viewBox="0 0 24 24"><path fill="#1c1b1f" d="M20 9H4v2h16V9zM4 15h16v-2H4v2z"/></svg>
<div class="row" style="left:39px;top:977.0px"></div>
<div class="ib fi" style="left:45px;top:984.0px"></div>
<svg class="ab" style="left:56px;top:994.7px" width="24" height="32" viewBox="0 0 384 512"><path fill="#388e3c" d="M369.90 97.90L286 14C277 5 264.80-.100 252.10-.100H48C21.50 0 0 21.50 0 48v416c0 26.50 21.50 48 48 48h288c26.50 0 48-21.50 48-48V131.90c0-12.70-5.10-25-14.10-34zM332.10 128H256V51.90l76.10 76.10zM48 464V48h160v104c0 13.30 10.70 24 24 24h104v288H48z"/><path fill="#388e3c" d="M240 40L344 144H240z"/><path d="M128 250 L256 400 M256 250 L128 400" stroke="#388e3c" stroke-width="50" stroke-linecap="round" fill="none"/></svg>
<div class="rl" style="left:132.5px;top:977.0px">競合分析<span class="l" style="width:40.50px;transform:scaleX(0.96)">.xlsx</span></div>
<div class="cb" style="left:544.5px;top:992.9px;width:55px;height:55px;background:#efeff1"></div>
<svg class="ab" style="left:553.50px;top:1002.70px;" width="37" height="37" viewBox="0 0 24 24"><path fill="#757575" d="M19 3h-4.18C14.40 1.84 13.30 1 12 1S9.60 1.84 9.18 3H5c-1.10 0-2 .900-2 2v14c0 1.10.900 2 2 2h14c1.10 0 2-.900 2-2V5c0-1.10-.900-2-2-2zm-7-.250c.410 0 .750.34.750.75s-.340.75-.750.75-.750-.340-.750-.750.34-.750.75-.750zM19 19H5V5h14v14zM15.08 11.03l-2.12-2.12L7 14.86V17h2.10l5.98-5.97zM16.85 9.27c.200-.200.20-.510 0-.710l-1.41-1.41c-.200-.200-.510-.200-.710 0l-1.06 1.06 2.12 2.12 1.06-1.06z"/></svg>
<div class="cb" style="left:604.8px;top:990.9px;width:59px;height:59px;background:#efeff1"></div>
<svg class="ab" style="left:613.30px;top:1000.20px;" width="42" height="42" viewBox="0 0 24 24"><path fill="#212121" d="M22 5.18L10.59 16.6l-4.24-4.24 1.41-1.41 2.83 2.83 10-10L22 5.18zM19.79 10.22c.13.57.21 1.17.21 1.78 0 4.42-3.58 8-8 8s-8-3.58-8-8 3.58-8 8-8c1.58 0 3.04.46 4.28 1.25l1.44-1.44C16.1 2.67 14.13 2 12 2 6.48 2 2 6.48 2 12s4.48 10 10 10 10-4.48 10-10c0-1.19-.22-2.33-.6-3.39l-1.61 1.61z"/></svg>
<div class="cb" style="left:669.1px;top:990.9px;width:59px;height:59px;background:#efeff1"></div>
<svg class="ab" style="left:677.60px;top:1000.20px;" width="42" height="42" viewBox="0 0 24 24"><path fill="#212121" d="M3 17.25V21h3.75L17.81 9.94l-3.75-3.75L3 17.25zM20.71 7.04c.39-.39.39-1.02 0-1.41l-2.34-2.34c-.39-.39-1.02-.39-1.41 0l-1.83 1.83 3.75 3.75 1.83-1.83z"/></svg>
<div class="cb" style="left:733.5px;top:990.9px;width:59px;height:59px;background:#efeff1"></div>
<svg class="ab" style="left:742.00px;top:1000.20px;" width="42" height="42" viewBox="0 0 24 24"><path fill="#212121" d="M6 19c0 1.1.9 2 2 2h8c1.1 0 2-.9 2-2V7H6v12zM19 4h-3.5l-1-1h-5l-1 1H5v2h14V4z"/></svg>
<svg class="ab" style="left:859.00px;top:997.00px;" width="48" height="48" viewBox="0 0 24 24"><path fill="#1c1b1f" d="M20 9H4v2h16V9zM4 15h16v-2H4v2z"/></svg>
<div class="card" style="left:955px;top:372px;height:804px;border-color:#64d68e"><div class="inner" style="height:772px"><div class="hd"></div><div class="dv"></div></div></div>
<div class="hb" style="left:999px;top:420.5px;background:#e4f5ea;border-color:#b5e9c8"></div>
<svg class="ab" style="left:1014.30px;top:436.00px;" width="42" height="42" viewBox="0 0 24 24"><path fill="#22c55e" d="M10 4H4c-1.1 0-1.99.9-1.99 2L2 18c0 1.1.9 2 2 2h16c1.1 0 2-.9 2-2V8c0-1.1-.9-2-2-2h-8l-2-2z"/></svg>
<div class="ht" style="left:1099.5px;top:429.5px"><span class="k" style="width:146.00px;transform:scaleX(0.82)">プロジェクト</span><span class="l" style="width:20.00px;transform:scaleX(0.90)">B</span></div>
<div class="cb" style="left:1550.1px;top:415.5px;width:83px;height:83px;background:#f4f4f4"></div>
<svg class="ab" style="left:1568.10px;top:433.50px;" width="47" height="47" viewBox="0 0 24 24"><path fill="#212121" d="M3 17.25V21h3.75L17.81 9.94l-3.75-3.75L3 17.25zM20.71 7.04c.39-.39.39-1.02 0-1.41l-2.34-2.34c-.39-.39-1.02-.39-1.41 0l-1.83 1.83 3.75 3.75 1.83-1.83z"/></svg>
<div class="cb" style="left:1651.1px;top:415.5px;width:83px;height:83px;background:#f4f4f4"></div>
<svg class="ab" style="left:1669.10px;top:433.50px;" width="47" height="47" viewBox="0 0 24 24"><path fill="#212121" d="M6 19c0 1.1.9 2 2 2h8c1.1 0 2-.9 2-2V7H6v12zM19 4h-3.5l-1-1h-5l-1 1H5v2h14V4z"/></svg>
<div class="cb" style="left:1747.8px;top:415.5px;width:83px;height:83px;background:#e4f5ea"></div>
<svg class="ab" style="left:1765.80px;top:433.50px;" width="47" height="47" viewBox="0 0 24 24"><path fill="#22c55e" d="M19 13h-6v6h-2v-6H5v-2h6V5h2v6h6v2z"/></svg>
<div class="row" style="left:974px;top:531.0px"></div>
<div class="ib fo" style="left:980px;top:538.0px"></div>
<svg class="ab" style="left:995.50px;top:553.50px;" width="42" height="42" viewBox="0 0 24 24"><path fill="#ff9800" d="M10 4H4c-1.1 0-1.99.9-1.99 2L2 18c0 1.1.9 2 2 2h16c1.1 0 2-.9 2-2V8c0-1.1-.9-2-2-2h-8l-2-2z"/></svg>
<div class="rl" style="left:1067.5px;top:531.0px"><span class="k" style="width:92.69px;transform:scaleX(0.82)">プロジェクト</span><span class="l" style="width:12.21px;transform:scaleX(0.87)">B</span></div>
<div class="cb" style="left:1479.5px;top:546.9px;width:55px;height:55px;background:#efeff1"></div>
<svg class="ab" style="left:1488.50px;top:556.70px;" width="37" height="37" viewBox="0 0 24 24"><path fill="#757575" d="M19 3h-4.18C14.40 1.84 13.30 1 12 1S9.60 1.84 9.18 3H5c-1.10 0-2 .900-2 2v14c0 1.10.900 2 2 2h14c1.10 0 2-.900 2-2V5c0-1.10-.900-2-2-2zm-7-.250c.410 0 .750.34.750.75s-.340.75-.750.75-.750-.340-.750-.750.34-.750.75-.750zM19 19H5V5h14v14zM15.08 11.03l-2.12-2.12L7 14.86V17h2.10l5.98-5.97zM16.85 9.27c.200-.200.20-.510 0-.710l-1.41-1.41c-.200-.200-.510-.200-.710 0l-1.06 1.06 2.12 2.12 1.06-1.06z"/></svg>
<div class="cb" style="left:1539.8px;top:544.9px;width:59px;height:59px;background:#fef1e4"></div>
<svg class="ab" style="left:1548.30px;top:554.20px;" width="42" height="42" viewBox="0 0 24 24"><path fill="#fb8c00" d="M22 5.18L10.59 16.6l-4.24-4.24 1.41-1.41 2.83 2.83 10-10L22 5.18zM19.79 10.22c.13.57.21 1.17.21 1.78 0 4.42-3.58 8-8 8s-8-3.58-8-8 3.58-8 8-8c1.58 0 3.04.46 4.28 1.25l1.44-1.44C16.1 2.67 14.13 2 12 2 6.48 2 2 6.48 2 12s4.48 10 10 10 10-4.48 10-10c0-1.19-.22-2.33-.6-3.39l-1.61 1.61z"/></svg>
<div class="cb" style="left:1604.1px;top:544.9px;width:59px;height:59px;background:#efeff1"></div>
<svg class="ab" style="left:1612.60px;top:554.20px;" width="42" height="42" viewBox="0 0 24 24"><path fill="#212121" d="M3 17.25V21h3.75L17.81 9.94l-3.75-3.75L3 17.25zM20.71 7.04c.39-.39.39-1.02 0-1.41l-2.34-2.34c-.39-.39-1.02-.39-1.41 0l-1.83 1.83 3.75 3.75 1.83-1.83z"/></svg>
<div class="cb" style="left:1668.5px;top:544.9px;width:59px;height:59px;background:#efeff1"></div>
<svg class="ab" style="left:1677.00px;top:554.20px;" width="42" height="42" viewBox="0 0 24 24"><path fill="#212121" d="M6 19c0 1.1.9 2 2 2h8c1.1 0 2-.9 2-2V7H6v12zM19 4h-3.5l-1-1h-5l-1 1H5v2h14V4z"/></svg>
<svg class="ab" style="left:1794.00px;top:551.00px;" width="48" height="48" viewBox="0 0 24 24"><path fill="#1c1b1f" d="M20 9H4v2h16V9zM4 15h16v-2H4v2z"/></svg>
<div class="row" style="left:974px;top:620.2px"></div>
<div class="ib fi" style="left:980px;top:627.2px"></div>
<svg class="ab" style="left:991px;top:637.9px" width="24" height="32" viewBox="0 0 384 512"><path fill="#1976d2" d="M369.90 97.90L286 14C277 5 264.80-.100 252.10-.100H48C21.50 0 0 21.50 0 48v416c0 26.50 21.50 48 48 48h288c26.50 0 48-21.50 48-48V131.90c0-12.70-5.10-25-14.10-34zM332.10 128H256V51.90l76.10 76.10zM48 464V48h160v104c0 13.30 10.70 24 24 24h104v288H48z"/><path fill="#1976d2" d="M240 40L344 144H240z"/><text x="192" y="408" text-anchor="middle" font-family="Liberation Sans, sans-serif" font-weight="bold" font-size="235" fill="#1976d2">W</text></svg>
<div class="rl" style="left:1067.5px;top:620.2px"><span class="k" style="width:91.58px;transform:scaleX(0.83)">ミーティング</span>議事録<span class="l" style="width:47.52px;transform:scaleX(0.94)">.docx</span></div>
<div class="cb" style="left:1479.5px;top:636.1px;width:55px;height:55px;background:#efeff1"></div>
<svg class="ab" style="left:1488.50px;top:645.90px;" width="37" height="37" viewBox="0 0 24 24"><path fill="#757575" d="M19 3h-4.18C14.40 1.84 13.30 1 12 1S9.60 1.84 9.18 3H5c-1.10 0-2 .900-2 2v14c0 1.10.900 2 2 2h14c1.10 0 2-.900 2-2V5c0-1.10-.900-2-2-2zm-7-.250c.410 0 .750.34.750.75s-.340.75-.750.75-.750-.340-.750-.750.34-.750.75-.750zM19 19H5V5h14v14zM15.08 11.03l-2.12-2.12L7 14.86V17h2.10l5.98-5.97zM16.85 9.27c.200-.200.20-.510 0-.710l-1.41-1.41c-.200-.200-.510-.200-.710 0l-1.06 1.06 2.12 2.12 1.06-1.06z"/></svg>
<div class="cb" style="left:1539.8px;top:634.1px;width:59px;height:59px;background:#efeff1"></div>
<svg class="ab" style="left:1548.30px;top:643.40px;" width="42" height="42" viewBox="0 0 24 24"><path fill="#212121" d="M22 5.18L10.59 16.6l-4.24-4.24 1.41-1.41 2.83 2.83 10-10L22 5.18zM19.79 10.22c.13.57.21 1.17.21 1.78 0 4.42-3.58 8-8 8s-8-3.58-8-8 3.58-8 8-8c1.58 0 3.04.46 4.28 1.25l1.44-1.44C16.1 2.67 14.13 2 12 2 6.48 2 2 6.48 2 12s4.48 10 10 10 10-4.48 10-10c0-1.19-.22-2.33-.6-3.39l-1.61 1.61z"/></svg>
<div class="cb" style="left:1604.1px;top:634.1px;width:59px;height:59px;background:#efeff1"></div>
<svg class="ab" style="left:1612.60px;top:643.40px;" width="42" height="42" viewBox="0 0 24 24"><path fill="#212121" d="M3 17.25V21h3.75L17.81 9.94l-3.75-3.75L3 17.25zM20.71 7.04c.39-.39.39-1.02 0-1.41l-2.34-2.34c-.39-.39-1.02-.39-1.41 0l-1.83 1.83 3.75 3.75 1.83-1.83z"/></svg>
<div class="cb" style="left:1668.5px;top:634.1px;width:59px;height:59px;background:#efeff1"></div>
<svg class="ab" style="left:1677.00px;top:643.40px;" width="42" height="42" viewBox="0 0 24 24"><path fill="#212121" d="M6 19c0 1.1.9 2 2 2h8c1.1 0 2-.9 2-2V7H6v12zM19 4h-3.5l-1-1h-5l-1 1H5v2h14V4z"/></svg>
<svg class="ab" style="left:1794.00px;top:640.20px;" width="48" height="48" viewBox="0 0 24 24"><path fill="#1c1b1f" d="M20 9H4v2h16V9zM4 15h16v-2H4v2z"/></svg>
<div class="row" style="left:974px;top:709.4px"></div>
<div class="ib fi" style="left:980px;top:716.4px"></div>
<svg class="ab" style="left:991px;top:727.1px" width="24" height="32" viewBox="0 0 384 512"><path fill="#f57c00" d="M369.90 97.90L286 14C277 5 264.80-.100 252.10-.100H48C21.50 0 0 21.50 0 48v416c0 26.50 21.50 48 48 48h288c26.50 0 48-21.50 48-48V131.90c0-12.70-5.10-25-14.10-34zM332.10 128H256V51.90l76.10 76.10zM48 464V48h160v104c0 13.30 10.70 24 24 24h104v288H48z"/><path fill="#f57c00" d="M240 40L344 144H240z"/><text x="190" y="412" text-anchor="middle" font-family="Liberation Sans, sans-serif" font-weight="bold" font-size="250" fill="#f57c00">P</text></svg>
<div class="rl" style="left:1067.5px;top:709.4px">企画書<span class="l" style="width:48.00px;transform:scaleX(1.05)">.pptx</span></div>
<div class="cb" style="left:1479.5px;top:725.3px;width:55px;height:55px;background:#efeff1"></div>
<svg class="ab" style="left:1488.50px;top:735.10px;" width="37" height="37" viewBox="0 0 24 24"><path fill="#757575" d="M19 3h-4.18C14.40 1.84 13.30 1 12 1S9.60 1.84 9.18 3H5c-1.10 0-2 .900-2 2v14c0 1.10.900 2 2 2h14c1.10 0 2-.900 2-2V5c0-1.10-.900-2-2-2zm-7-.250c.410 0 .750.34.750.75s-.340.75-.750.75-.750-.340-.750-.750.34-.750.75-.750zM19 19H5V5h14v14zM15.08 11.03l-2.12-2.12L7 14.86V17h2.10l5.98-5.97zM16.85 9.27c.200-.200.20-.510 0-.710l-1.41-1.41c-.200-.200-.510-.200-.710 0l-1.06 1.06 2.12 2.12 1.06-1.06z"/></svg>
<div class="cb" style="left:1539.8px;top:723.3px;width:59px;height:59px;background:#efeff1"></div>
<svg class="ab" style="left:1548.30px;top:732.60px;" width="42" height="42" viewBox="0 0 24 24"><path fill="#212121" d="M22 5.18L10.59 16.6l-4.24-4.24 1.41-1.41 2.83 2.83 10-10L22 5.18zM19.79 10.22c.13.57.21 1.17.21 1.78 0 4.42-3.58 8-8 8s-8-3.58-8-8 3.58-8 8-8c1.58 0 3.04.46 4.28 1.25l1.44-1.44C16.1 2.67 14.13 2 12 2 6.48 2 2 6.48 2 12s4.48 10 10 10 10-4.48 10-10c0-1.19-.22-2.33-.6-3.39l-1.61 1.61z"/></svg>
<div class="cb" style="left:1604.1px;top:723.3px;width:59px;height:59px;background:#efeff1"></div>
<svg class="ab" style="left:1612.60px;top:732.60px;" width="42" height="42" viewBox="0 0 24 24"><path fill="#212121" d="M3 17.25V21h3.75L17.81 9.94l-3.75-3.75L3 17.25zM20.71 7.04c.39-.39.39-1.02 0-1.41l-2.34-2.34c-.39-.39-1.02-.39-1.41 0l-1.83 1.83 3.75 3.75 1.83-1.83z"/></svg>
<div class="cb" style="left:1668.5px;top:723.3px;width:59px;height:59px;background:#efeff1"></div>
<svg class="ab" style="left:1677.00px;top:732.60px;" width="42" height="42" viewBox="0 0 24 24"><path fill="#212121" d="M6 19c0 1.1.9 2 2 2h8c1.1 0 2-.9 2-2V7H6v12zM19 4h-3.5l-1-1h-5l-1 1H5v2h14V4z"/></svg>
<svg class="ab" style="left:1794.00px;top:729.40px;" width="48" height="48" viewBox="0 0 24 24"><path fill="#1c1b1f" d="M20 9H4v2h16V9zM4 15h16v-2H4v2z"/></svg>
<div class="row" style="left:974px;top:798.6px"></div>
<div class="ib fi" style="left:980px;top:805.6px"></div>
<svg class="ab" style="left:991px;top:816.3px" width="24" height="32" viewBox="0 0 384 512"><path fill="#388e3c" d="M369.90 97.90L286 14C277 5 264.80-.100 252.10-.100H48C21.50 0 0 21.50 0 48v416c0 26.50 21.50 48 48 48h288c26.50 0 48-21.50 48-48V131.90c0-12.70-5.10-25-14.10-34zM332.10 128H256V51.90l76.10 76.10zM48 464V48h160v104c0 13.30 10.70 24 24 24h104v288H48z"/><path fill="#388e3c" d="M240 40L344 144H240z"/><path d="M128 250 L256 400 M256 250 L128 400" stroke="#388e3c" stroke-width="50" stroke-linecap="round" fill="none"/></svg>
<div class="rl" style="left:1067.5px;top:798.6px">見積書<span class="l" style="width:39.10px;transform:scaleX(0.93)">.xlsx</span></div>
<div class="cb" style="left:1479.5px;top:814.5px;width:55px;height:55px;background:#efeff1"></div>
<svg class="ab" style="left:1488.50px;top:824.30px;" width="37" height="37" viewBox="0 0 24 24"><path fill="#757575" d="M19 3h-4.18C14.40 1.84 13.30 1 12 1S9.60 1.84 9.18 3H5c-1.10 0-2 .900-2 2v14c0 1.10.900 2 2 2h14c1.10 0 2-.900 2-2V5c0-1.10-.900-2-2-2zm-7-.250c.410 0 .750.34.750.75s-.340.75-.750.75-.750-.340-.750-.750.34-.750.75-.750zM19 19H5V5h14v14zM15.08 11.03l-2.12-2.12L7 14.86V17h2.10l5.98-5.97zM16.85 9.27c.200-.200.20-.510 0-.710l-1.41-1.41c-.200-.200-.510-.200-.710 0l-1.06 1.06 2.12 2.12 1.06-1.06z"/></svg>
<div class="cb" style="left:1539.8px;top:812.5px;width:59px;height:59px;background:#efeff1"></div>
<svg class="ab" style="left:1548.30px;top:821.80px;" width="42" height="42" viewBox="0 0 24 24"><path fill="#212121" d="M22 5.18L10.59 16.6l-4.24-4.24 1.41-1.41 2.83 2.83 10-10L22 5.18zM19.79 10.22c.13.57.21 1.17.21 1.78 0 4.42-3.58 8-8 8s-8-3.58-8-8 3.58-8 8-8c1.58 0 3.04.46 4.28 1.25l1.44-1.44C16.1 2.67 14.13 2 12 2 6.48 2 2 6.48 2 12s4.48 10 10 10 10-4.48 10-10c0-1.19-.22-2.33-.6-3.39l-1.61 1.61z"/></svg>
<div class="cb" style="left:1604.1px;top:812.5px;width:59px;height:59px;background:#efeff1"></div>
<svg class="ab" style="left:1612.60px;top:821.80px;" width="42" height="42" viewBox="0 0 24 24"><path fill="#212121" d="M3 17.25V21h3.75L17.81 9.94l-3.75-3.75L3 17.25zM20.71 7.04c.39-.39.39-1.02 0-1.41l-2.34-2.34c-.39-.39-1.02-.39-1.41 0l-1.83 1.83 3.75 3.75 1.83-1.83z"/></svg>
<div class="cb" style="left:1668.5px;top:812.5px;width:59px;height:59px;background:#efeff1"></div>
<svg class="ab" style="left:1677.00px;top:821.80px;" width="42" height="42" viewBox="0 0 24 24"><path fill="#212121" d="M6 19c0 1.1.9 2 2 2h8c1.1 0 2-.9 2-2V7H6v12zM19 4h-3.5l-1-1h-5l-1 1H5v2h14V4z"/></svg>
<svg class="ab" style="left:1794.00px;top:818.60px;" width="48" height="48" viewBox="0 0 24 24"><path fill="#1c1b1f" d="M20 9H4v2h16V9zM4 15h16v-2H4v2z"/></svg>
<div class="row" style="left:974px;top:887.8px"></div>
<div class="ib fo" style="left:980px;top:894.8px"></div>
<svg class="ab" style="left:995.50px;top:910.30px;" width="42" height="42" viewBox="0 0 24 24"><path fill="#ff9800" d="M10 4H4c-1.1 0-1.99.9-1.99 2L2 18c0 1.1.9 2 2 2h16c1.1 0 2-.9 2-2V8c0-1.1-.9-2-2-2h-8l-2-2z"/></svg>
<div class="rl" style="left:1067.5px;top:887.8px"><span class="k" style="width:64.26px;transform:scaleX(0.83)">デザイン</span>案</div>
<div class="cb" style="left:1479.5px;top:903.7px;width:55px;height:55px;background:#efeff1"></div>
<svg class="ab" style="left:1488.50px;top:913.50px;" width="37" height="37" viewBox="0 0 24 24"><path fill="#757575" d="M19 3h-4.18C14.40 1.84 13.30 1 12 1S9.60 1.84 9.18 3H5c-1.10 0-2 .900-2 2v14c0 1.10.900 2 2 2h14c1.10 0 2-.900 2-2V5c0-1.10-.900-2-2-2zm-7-.250c.410 0 .750.34.750.75s-.340.75-.750.75-.750-.340-.750-.750.34-.750.75-.750zM19 19H5V5h14v14zM15.08 11.03l-2.12-2.12L7 14.86V17h2.10l5.98-5.97zM16.85 9.27c.200-.200.20-.510 0-.710l-1.41-1.41c-.200-.200-.510-.200-.710 0l-1.06 1.06 2.12 2.12 1.06-1.06z"/></svg>
<div class="cb" style="left:1539.8px;top:901.7px;width:59px;height:59px;background:#efeff1"></div>
<svg class="ab" style="left:1548.30px;top:911.00px;" width="42" height="42" viewBox="0 0 24 24"><path fill="#212121" d="M22 5.18L10.59 16.6l-4.24-4.24 1.41-1.41 2.83 2.83 10-10L22 5.18zM19.79 10.22c.13.57.21 1.17.21 1.78 0 4.42-3.58 8-8 8s-8-3.58-8-8 3.58-8 8-8c1.58 0 3.04.46 4.28 1.25l1.44-1.44C16.1 2.67 14.13 2 12 2 6.48 2 2 6.48 2 12s4.48 10 10 10 10-4.48 10-10c0-1.19-.22-2.33-.6-3.39l-1.61 1.61z"/></svg>
<div class="cb" style="left:1604.1px;top:901.7px;width:59px;height:59px;background:#efeff1"></div>
<svg class="ab" style="left:1612.60px;top:911.00px;" width="42" height="42" viewBox="0 0 24 24"><path fill="#212121" d="M3 17.25V21h3.75L17.81 9.94l-3.75-3.75L3 17.25zM20.71 7.04c.39-.39.39-1.02 0-1.41l-2.34-2.34c-.39-.39-1.02-.39-1.41 0l-1.83 1.83 3.75 3.75 1.83-1.83z"/></svg>
<div class="cb" style="left:1668.5px;top:901.7px;width:59px;height:59px;background:#efeff1"></div>
<svg class="ab" style="left:1677.00px;top:911.00px;" width="42" height="42" viewBox="0 0 24 24"><path fill="#212121" d="M6 19c0 1.1.9 2 2 2h8c1.1 0 2-.9 2-2V7H6v12zM19 4h-3.5l-1-1h-5l-1 1H5v2h14V4z"/></svg>
<svg class="ab" style="left:1794.00px;top:907.80px;" width="48" height="48" viewBox="0 0 24 24"><path fill="#1c1b1f" d="M20 9H4v2h16V9zM4 15h16v-2H4v2z"/></svg>
<div class="row" style="left:974px;top:977.0px"></div>
<div class="ib fi" style="left:980px;top:984.0px"></div>
<svg class="ab" style="left:1000.50px;top:1004.50px;" width="32" height="32" viewBox="0 0 24 24"><path fill="#9e9e9e" d="M6 2c-1.1 0-1.99.9-1.99 2L4 20c0 1.1.89 2 1.99 2H18c1.1 0 2-.9 2-2V8l-6-6H6zm7 7V3.5L18.5 9H13z"/></svg>
<div class="rl" style="left:1067.5px;top:977.0px"><span class="l" style="width:20.01px;transform:scaleX(0.95)">UI</span>設計<span class="l" style="width:38.16px;transform:scaleX(0.96)">.psd</span></div>
<div class="cb" style="left:1479.5px;top:992.9px;width:55px;height:55px;background:#efeff1"></div>
<svg class="ab" style="left:1488.50px;top:1002.70px;" width="37" height="37" viewBox="0 0 24 24"><path fill="#757575" d="M19 3h-4.18C14.40 1.84 13.30 1 12 1S9.60 1.84 9.18 3H5c-1.10 0-2 .900-2 2v14c0 1.10.900 2 2 2h14c1.10 0 2-.900 2-2V5c0-1.10-.900-2-2-2zm-7-.250c.410 0 .750.34.750.75s-.340.75-.750.75-.750-.340-.750-.750.34-.750.75-.750zM19 19H5V5h14v14zM15.08 11.03l-2.12-2.12L7 14.86V17h2.10l5.98-5.97zM16.85 9.27c.200-.200.20-.510 0-.710l-1.41-1.41c-.200-.200-.510-.200-.710 0l-1.06 1.06 2.12 2.12 1.06-1.06z"/></svg>
<div class="cb" style="left:1539.8px;top:990.9px;width:59px;height:59px;background:#efeff1"></div>
<svg class="ab" style="left:1548.30px;top:1000.20px;" width="42" height="42" viewBox="0 0 24 24"><path fill="#212121" d="M22 5.18L10.59 16.6l-4.24-4.24 1.41-1.41 2.83 2.83 10-10L22 5.18zM19.79 10.22c.13.57.21 1.17.21 1.78 0 4.42-3.58 8-8 8s-8-3.58-8-8 3.58-8 8-8c1.58 0 3.04.46 4.28 1.25l1.44-1.44C16.1 2.67 14.13 2 12 2 6.48 2 2 6.48 2 12s4.48 10 10 10 10-4.48 10-10c0-1.19-.22-2.33-.6-3.39l-1.61 1.61z"/></svg>
<div class="cb" style="left:1604.1px;top:990.9px;width:59px;height:59px;background:#efeff1"></div>
<svg class="ab" style="left:1612.60px;top:1000.20px;" width="42" height="42" viewBox="0 0 24 24"><path fill="#212121" d="M3 17.25V21h3.75L17.81 9.94l-3.75-3.75L3 17.25zM20.71 7.04c.39-.39.39-1.02 0-1.41l-2.34-2.34c-.39-.39-1.02-.39-1.41 0l-1.83 1.83 3.75 3.75 1.83-1.83z"/></svg>
<div class="cb" style="left:1668.5px;top:990.9px;width:59px;height:59px;background:#efeff1"></div>
<svg class="ab" style="left:1677.00px;top:1000.20px;" width="42" height="42" viewBox="0 0 24 24"><path fill="#212121" d="M6 19c0 1.1.9 2 2 2h8c1.1 0 2-.9 2-2V7H6v12zM19 4h-3.5l-1-1h-5l-1 1H5v2h14V4z"/></svg>
<svg class="ab" style="left:1794.00px;top:997.00px;" width="48" height="48" viewBox="0 0 24 24"><path fill="#1c1b1f" d="M20 9H4v2h16V9zM4 15h16v-2H4v2z"/></svg>
<div class="row" style="left:974px;top:1066.2px"></div>
<div class="ib fi" style="left:980px;top:1073.2px"></div>
<svg class="ab" style="left:1000.5px;top:1093.7px" width="32" height="32" viewBox="0 0 24 24"><path fill="#f44336" d="M20 2H8c-1.10 0-2 .900-2 2v12c0 1.10.900 2 2 2h12c1.10 0 2-.900 2-2V4c0-1.10-.900-2-2-2zM4 6H2v14c0 1.10.900 2 2 2h14v-2H4V6z"/><text x="14" y="13" text-anchor="middle" font-family="Liberation Sans, sans-serif" font-weight="bold" font-size="7.2" fill="#fff" textLength="13.6" lengthAdjust="spacingAndGlyphs">PDF</text></svg>
<div class="rl" style="left:1067.5px;top:1066.2px">仕様書<span class="l" style="width:37.50px;transform:scaleX(1.07)">.pdf</span></div>
<div class="cb" style="left:1479.5px;top:1082.1px;width:55px;height:55px;background:#efeff1"></div>
<svg class="ab" style="left:1488.50px;top:1091.90px;" width="37" height="37" viewBox="0 0 24 24"><path fill="#757575" d="M19 3h-4.18C14.40 1.84 13.30 1 12 1S9.60 1.84 9.18 3H5c-1.10 0-2 .900-2 2v14c0 1.10.900 2 2 2h14c1.10 0 2-.900 2-2V5c0-1.10-.900-2-2-2zm-7-.250c.410 0 .750.34.750.75s-.340.75-.750.75-.750-.340-.750-.750.34-.750.75-.750zM19 19H5V5h14v14zM15.08 11.03l-2.12-2.12L7 14.86V17h2.10l5.98-5.97zM16.85 9.27c.200-.200.20-.510 0-.710l-1.41-1.41c-.200-.200-.510-.200-.710 0l-1.06 1.06 2.12 2.12 1.06-1.06z"/></svg>
<div class="cb" style="left:1539.8px;top:1080.1px;width:59px;height:59px;background:#fef1e4"></div>
<svg class="ab" style="left:1548.30px;top:1089.40px;" width="42" height="42" viewBox="0 0 24 24"><path fill="#fb8c00" d="M22 5.18L10.59 16.6l-4.24-4.24 1.41-1.41 2.83 2.83 10-10L22 5.18zM19.79 10.22c.13.57.21 1.17.21 1.78 0 4.42-3.58 8-8 8s-8-3.58-8-8 3.58-8 8-8c1.58 0 3.04.46 4.28 1.25l1.44-1.44C16.1 2.67 14.13 2 12 2 6.48 2 2 6.48 2 12s4.48 10 10 10 10-4.48 10-10c0-1.19-.22-2.33-.6-3.39l-1.61 1.61z"/></svg>
<div class="cb" style="left:1604.1px;top:1080.1px;width:59px;height:59px;background:#efeff1"></div>
<svg class="ab" style="left:1612.60px;top:1089.40px;" width="42" height="42" viewBox="0 0 24 24"><path fill="#212121" d="M3 17.25V21h3.75L17.81 9.94l-3.75-3.75L3 17.25zM20.71 7.04c.39-.39.39-1.02 0-1.41l-2.34-2.34c-.39-.39-1.02-.39-1.41 0l-1.83 1.83 3.75 3.75 1.83-1.83z"/></svg>
<div class="cb" style="left:1668.5px;top:1080.1px;width:59px;height:59px;background:#efeff1"></div>
<svg class="ab" style="left:1677.00px;top:1089.40px;" width="42" height="42" viewBox="0 0 24 24"><path fill="#212121" d="M6 19c0 1.1.9 2 2 2h8c1.1 0 2-.9 2-2V7H6v12zM19 4h-3.5l-1-1h-5l-1 1H5v2h14V4z"/></svg>
<svg class="ab" style="left:1794.00px;top:1086.20px;" width="48" height="48" viewBox="0 0 24 24"><path fill="#1c1b1f" d="M20 9H4v2h16V9zM4 15h16v-2H4v2z"/></svg>
<div class="card" style="left:1890.7px;top:372px;height:804px;border-color:#cbadda"><div class="inner" style="height:772px"><div class="hd"></div><div class="dv"></div></div></div>
<div class="hb" style="left:1934.7px;top:420.5px;background:#f4eff6;border-color:#e6d8ee"></div>
<svg class="ab" style="left:1950.00px;top:436.00px;" width="42" height="42" viewBox="0 0 24 24"><path fill="#bb8fd6" d="M10 4H4c-1.1 0-1.99.9-1.99 2L2 18c0 1.1.9 2 2 2h16c1.1 0 2-.9 2-2V8c0-1.1-.9-2-2-2h-8l-2-2z"/></svg>
<div class="ht" style="left:2035.2px;top:429.5px"><span class="l" style="width:86.00px;transform:scaleX(1.04)">demo</span></div>
<div class="cb" style="left:2485.8px;top:415.5px;width:83px;height:83px;background:#f4f4f4"></div>
<svg class="ab" style="left:2503.80px;top:433.50px;" width="47" height="47" viewBox="0 0 24 24"><path fill="#212121" d="M3 17.25V21h3.75L17.81 9.94l-3.75-3.75L3 17.25zM20.71 7.04c.39-.39.39-1.02 0-1.41l-2.34-2.34c-.39-.39-1.02-.39-1.41 0l-1.83 1.83 3.75 3.75 1.83-1.83z"/></svg>
<div class="cb" style="left:2586.8px;top:415.5px;width:83px;height:83px;background:#f4f4f4"></div>
<svg class="ab" style="left:2604.80px;top:433.50px;" width="47" height="47" viewBox="0 0 24 24"><path fill="#212121" d="M6 19c0 1.1.9 2 2 2h8c1.1 0 2-.9 2-2V7H6v12zM19 4h-3.5l-1-1h-5l-1 1H5v2h14V4z"/></svg>
<div class="cb" style="left:2683.5px;top:415.5px;width:83px;height:83px;background:#f4eff6"></div>
<svg class="ab" style="left:2701.50px;top:433.50px;" width="47" height="47" viewBox="0 0 24 24"><path fill="#bb8fd6" d="M19 13h-6v6h-2v-6H5v-2h6V5h2v6h6v2z"/></svg>
<div class="row" style="left:1909.7px;top:531.0px"></div>
<div class="ib fi" style="left:1915.7px;top:538.0px"></div>
<svg class="ab" style="left:1926.7px;top:548.7px" width="24" height="32" viewBox="0 0 384 512"><path fill="#388e3c" d="M369.90 97.90L286 14C277 5 264.80-.100 252.10-.100H48C21.50 0 0 21.50 0 48v416c0 26.50 21.50 48 48 48h288c26.50 0 48-21.50 48-48V131.90c0-12.70-5.10-25-14.10-34zM332.10 128H256V51.90l76.10 76.10zM48 464V48h160v104c0 13.30 10.70 24 24 24h104v288H48z"/><path fill="#388e3c" d="M240 40L344 144H240z"/><path d="M128 250 L256 400 M256 250 L128 400" stroke="#388e3c" stroke-width="50" stroke-linecap="round" fill="none"/></svg>
<div class="rl" style="left:2003.2px;top:531.0px"><span class="k" style="width:48.75px;transform:scaleX(0.83)">データ</span>分析<span class="l" style="width:38.25px;transform:scaleX(0.91)">.xlsx</span></div>
<div class="cb" style="left:2415.2px;top:546.9px;width:55px;height:55px;background:#efeff1"></div>
<svg class="ab" style="left:2424.20px;top:556.70px;" width="37" height="37" viewBox="0 0 24 24"><path fill="#757575" d="M19 3h-4.18C14.40 1.84 13.30 1 12 1S9.60 1.84 9.18 3H5c-1.10 0-2 .900-2 2v14c0 1.10.900 2 2 2h14c1.10 0 2-.900 2-2V5c0-1.10-.900-2-2-2zm-7-.250c.410 0 .750.34.750.75s-.340.75-.750.75-.750-.340-.750-.750.34-.750.75-.750zM19 19H5V5h14v14zM15.08 11.03l-2.12-2.12L7 14.86V17h2.10l5.98-5.97zM16.85 9.27c.200-.200.20-.510 0-.710l-1.41-1.41c-.200-.200-.510-.200-.710 0l-1.06 1.06 2.12 2.12 1.06-1.06z"/></svg>
<div class="cb" style="left:2475.5px;top:544.9px;width:59px;height:59px;background:#efeff1"></div>
<svg class="ab" style="left:2484.00px;top:554.20px;" width="42" height="42" viewBox="0 0 24 24"><path fill="#212121" d="M22 5.18L10.59 16.6l-4.24-4.24 1.41-1.41 2.83 2.83 10-10L22 5.18zM19.79 10.22c.13.57.21 1.17.21 1.78 0 4.42-3.58 8-8 8s-8-3.58-8-8 3.58-8 8-8c1.58 0 3.04.46 4.28 1.25l1.44-1.44C16.1 2.67 14.13 2 12 2 6.48 2 2 6.48 2 12s4.48 10 10 10 10-4.48 10-10c0-1.19-.22-2.33-.6-3.39l-1.61 1.61z"/></svg>
<div class="cb" style="left:2539.8px;top:544.9px;width:59px;height:59px;background:#efeff1"></div>
<svg class="ab" style="left:2548.30px;top:554.20px;" width="42" height="42" viewBox="0 0 24 24"><path fill="#212121" d="M3 17.25V21h3.75L17.81 9.94l-3.75-3.75L3 17.25zM20.71 7.04c.39-.39.39-1.02 0-1.41l-2.34-2.34c-.39-.39-1.02-.39-1.41 0l-1.83 1.83 3.75 3.75 1.83-1.83z"/></svg>
<div class="cb" style="left:2604.2px;top:544.9px;width:59px;height:59px;background:#efeff1"></div>
<svg class="ab" style="left:2612.70px;top:554.20px;" width="42" height="42" viewBox="0 0 24 24"><path fill="#212121" d="M6 19c0 1.1.9 2 2 2h8c1.1 0 2-.9 2-2V7H6v12zM19 4h-3.5l-1-1h-5l-1 1H5v2h14V4z"/></svg>
<svg class="ab" style="left:2729.70px;top:551.00px;" width="48" height="48" viewBox="0 0 24 24"><path fill="#1c1b1f" d="M20 9H4v2h16V9zM4 15h16v-2H4v2z"/></svg>
<div class="row" style="left:1909.7px;top:620.2px"></div>
<div class="ib fi" style="left:1915.7px;top:627.2px"></div>
<svg class="ab" style="left:1936.20px;top:647.70px;" width="32" height="32" viewBox="0 0 24 24"><path fill="#607d8b" d="M14 2H6c-1.1 0-1.99.9-1.99 2L4 20c0 1.1.89 2 1.99 2H18c1.1 0 2-.9 2-2V8l-6-6zm2 16H8v-2h8v2zm0-4H8v-2h8v2zm-3-5V3.5L18.5 9H13z"/></svg>
<div class="rl" style="left:2003.2px;top:620.2px">会議<span class="k" style="width:32.52px;transform:scaleX(0.84)">メモ</span><span class="l" style="width:28.78px;transform:scaleX(1.02)">.txt</span></div>
<div class="cb" style="left:2415.2px;top:636.1px;width:55px;height:55px;background:#efeff1"></div>
<svg class="ab" style="left:2424.20px;top:645.90px;" width="37" height="37" viewBox="0 0 24 24"><path fill="#757575" d="M19 3h-4.18C14.40 1.84 13.30 1 12 1S9.60 1.84 9.18 3H5c-1.10 0-2 .900-2 2v14c0 1.10.900 2 2 2h14c1.10 0 2-.900 2-2V5c0-1.10-.900-2-2-2zm-7-.250c.410 0 .750.34.750.75s-.340.75-.750.75-.750-.340-.750-.750.34-.750.75-.750zM19 19H5V5h14v14zM15.08 11.03l-2.12-2.12L7 14.86V17h2.10l5.98-5.97zM16.85 9.27c.200-.200.20-.510 0-.710l-1.41-1.41c-.200-.200-.510-.200-.710 0l-1.06 1.06 2.12 2.12 1.06-1.06z"/></svg>
<div class="cb" style="left:2475.5px;top:634.1px;width:59px;height:59px;background:#efeff1"></div>
<svg class="ab" style="left:2484.00px;top:643.40px;" width="42" height="42" viewBox="0 0 24 24"><path fill="#212121" d="M22 5.18L10.59 16.6l-4.24-4.24 1.41-1.41 2.83 2.83 10-10L22 5.18zM19.79 10.22c.13.57.21 1.17.21 1.78 0 4.42-3.58 8-8 8s-8-3.58-8-8 3.58-8 8-8c1.58 0 3.04.46 4.28 1.25l1.44-1.44C16.1 2.67 14.13 2 12 2 6.48 2 2 6.48 2 12s4.48 10 10 10 10-4.48 10-10c0-1.19-.22-2.33-.6-3.39l-1.61 1.61z"/></svg>
<div class="cb" style="left:2539.8px;top:634.1px;width:59px;height:59px;background:#efeff1"></div>
<svg class="ab" style="left:2548.30px;top:643.40px;" width="42" height="42" viewBox="0 0 24 24"><path fill="#212121" d="M3 17.25V21h3.75L17.81 9.94l-3.75-3.75L3 17.25zM20.71 7.04c.39-.39.39-1.02 0-1.41l-2.34-2.34c-.39-.39-1.02-.39-1.41 0l-1.83 1.83 3.75 3.75 1.83-1.83z"/></svg>
<div class="cb" style="left:2604.2px;top:634.1px;width:59px;height:59px;background:#efeff1"></div>
<svg class="ab" style="left:2612.70px;top:643.40px;" width="42" height="42" viewBox="0 0 24 24"><path fill="#212121" d="M6 19c0 1.1.9 2 2 2h8c1.1 0 2-.9 2-2V7H6v12zM19 4h-3.5l-1-1h-5l-1 1H5v2h14V4z"/></svg>
<svg class="ab" style="left:2729.70px;top:640.20px;" width="48" height="48" viewBox="0 0 24 24"><path fill="#1c1b1f" d="M20 9H4v2h16V9zM4 15h16v-2H4v2z"/></svg>
<div class="row" style="left:1909.7px;top:709.4px"></div>
<div class="ib fi" style="left:1915.7px;top:716.4px"></div>
<svg class="ab" style="left:1936.2px;top:736.9px" width="32" height="32" viewBox="0 0 24 24"><path fill="#f44336" d="M20 2H8c-1.10 0-2 .900-2 2v12c0 1.10.900 2 2 2h12c1.10 0 2-.900 2-2V4c0-1.10-.900-2-2-2zM4 6H2v14c0 1.10.900 2 2 2h14v-2H4V6z"/><text x="14" y="13" text-anchor="middle" font-family="Liberation Sans, sans-serif" font-weight="bold" font-size="7.2" fill="#fff" textLength="13.6" lengthAdjust="spacingAndGlyphs">PDF</text></svg>
<div class="rl" style="left:2003.2px;top:709.4px">重要資料<span class="l" style="width:37.10px;transform:scaleX(1.05)">.pdf</span></div>
<div class="cb" style="left:2415.2px;top:725.3px;width:55px;height:55px;background:#efeff1"></div>
<svg class="ab" style="left:2424.20px;top:735.10px;" width="37" height="37" viewBox="0 0 24 24"><path fill="#757575" d="M19 3h-4.18C14.40 1.84 13.30 1 12 1S9.60 1.84 9.18 3H5c-1.10 0-2 .900-2 2v14c0 1.10.900 2 2 2h14c1.10 0 2-.900 2-2V5c0-1.10-.900-2-2-2zm-7-.250c.410 0 .750.34.750.75s-.340.75-.750.75-.750-.340-.750-.750.34-.750.75-.750zM19 19H5V5h14v14zM15.08 11.03l-2.12-2.12L7 14.86V17h2.10l5.98-5.97zM16.85 9.27c.200-.200.20-.510 0-.710l-1.41-1.41c-.200-.200-.510-.200-.710 0l-1.06 1.06 2.12 2.12 1.06-1.06z"/></svg>
<div class="cb" style="left:2475.5px;top:723.3px;width:59px;height:59px;background:#efeff1"></div>
<svg class="ab" style="left:2484.00px;top:732.60px;" width="42" height="42" viewBox="0 0 24 24"><path fill="#212121" d="M22 5.18L10.59 16.6l-4.24-4.24 1.41-1.41 2.83 2.83 10-10L22 5.18zM19.79 10.22c.13.57.21 1.17.21 1.78 0 4.42-3.58 8-8 8s-8-3.58-8-8 3.58-8 8-8c1.58 0 3.04.46 4.28 1.25l1.44-1.44C16.1 2.67 14.13 2 12 2 6.48 2 2 6.48 2 12s4.48 10 10 10 10-4.48 10-10c0-1.19-.22-2.33-.6-3.39l-1.61 1.61z"/></svg>
<div class="cb" style="left:2539.8px;top:723.3px;width:59px;height:59px;background:#efeff1"></div>
<svg class="ab" style="left:2548.30px;top:732.60px;" width="42" height="42" viewBox="0 0 24 24"><path fill="#212121" d="M3 17.25V21h3.75L17.81 9.94l-3.75-3.75L3 17.25zM20.71 7.04c.39-.39.39-1.02 0-1.41l-2.34-2.34c-.39-.39-1.02-.39-1.41 0l-1.83 1.83 3.75 3.75 1.83-1.83z"/></svg>
<div class="cb" style="left:2604.2px;top:723.3px;width:59px;height:59px;background:#efeff1"></div>
<svg class="ab" style="left:2612.70px;top:732.60px;" width="42" height="42" viewBox="0 0 24 24"><path fill="#212121" d="M6 19c0 1.1.9 2 2 2h8c1.1 0 2-.9 2-2V7H6v12zM19 4h-3.5l-1-1h-5l-1 1H5v2h14V4z"/></svg>
<svg class="ab" style="left:2729.70px;top:729.40px;" width="48" height="48" viewBox="0 0 24 24"><path fill="#1c1b1f" d="M20 9H4v2h16V9zM4 15h16v-2H4v2z"/></svg>
<div class="row" style="left:1909.7px;top:798.6px"></div>
<div class="ib fi" style="left:1915.7px;top:805.6px"></div>
<svg class="ab" style="left:1926.7px;top:816.3px" width="24" height="32" viewBox="0 0 384 512"><path fill="#1976d2" d="M369.90 97.90L286 14C277 5 264.80-.100 252.10-.100H48C21.50 0 0 21.50 0 48v416c0 26.50 21.50 48 48 48h288c26.50 0 48-21.50 48-48V131.90c0-12.70-5.10-25-14.10-34zM332.10 128H256V51.90l76.10 76.10zM48 464V48h160v104c0 13.30 10.70 24 24 24h104v288H48z"/><path fill="#1976d2" d="M240 40L344 144H240z"/><text x="192" y="408" text-anchor="middle" font-family="Liberation Sans, sans-serif" font-weight="bold" font-size="235" fill="#1976d2">W</text></svg>
<div class="rl" style="left:2003.2px;top:798.6px">提案書<span class="l" style="width:50.20px;transform:scaleX(0.99)">.docx</span></div>
<div class="cb" style="left:2415.2px;top:814.5px;width:55px;height:55px;background:#efeff1"></div>
<svg class="ab" style="left:2424.20px;top:824.30px;" width="37" height="37" viewBox="0 0 24 24"><path fill="#757575" d="M19 3h-4.18C14.40 1.84 13.30 1 12 1S9.60 1.84 9.18 3H5c-1.10 0-2 .900-2 2v14c0 1.10.900 2 2 2h14c1.10 0 2-.900 2-2V5c0-1.10-.900-2-2-2zm-7-.250c.410 0 .750.34.750.75s-.340.75-.750.75-.750-.340-.750-.750.34-.750.75-.750zM19 19H5V5h14v14zM15.08 11.03l-2.12-2.12L7 14.86V17h2.10l5.98-5.97zM16.85 9.27c.200-.200.20-.510 0-.710l-1.41-1.41c-.200-.200-.510-.200-.710 0l-1.06 1.06 2.12 2.12 1.06-1.06z"/></svg>
<div class="cb" style="left:2475.5px;top:812.5px;width:59px;height:59px;background:#efeff1"></div>
<svg class="ab" style="left:2484.00px;top:821.80px;" width="42" height="42" viewBox="0 0 24 24"><path fill="#212121" d="M22 5.18L10.59 16.6l-4.24-4.24 1.41-1.41 2.83 2.83 10-10L22 5.18zM19.79 10.22c.13.57.21 1.17.21 1.78 0 4.42-3.58 8-8 8s-8-3.58-8-8 3.58-8 8-8c1.58 0 3.04.46 4.28 1.25l1.44-1.44C16.1 2.67 14.13 2 12 2 6.48 2 2 6.48 2 12s4.48 10 10 10 10-4.48 10-10c0-1.19-.22-2.33-.6-3.39l-1.61 1.61z"/></svg>
<div class="cb" style="left:2539.8px;top:812.5px;width:59px;height:59px;background:#efeff1"></div>
<svg class="ab" style="left:2548.30px;top:821.80px;" width="42" height="42" viewBox="0 0 24 24"><path fill="#212121" d="M3 17.25V21h3.75L17.81 9.94l-3.75-3.75L3 17.25zM20.71 7.04c.39-.39.39-1.02 0-1.41l-2.34-2.34c-.39-.39-1.02-.39-1.41 0l-1.83 1.83 3.75 3.75 1.83-1.83z"/></svg>
<div class="cb" style="left:2604.2px;top:812.5px;width:59px;height:59px;background:#efeff1"></div>
<svg class="ab" style="left:2612.70px;top:821.80px;" width="42" height="42" viewBox="0 0 24 24"><path fill="#212121" d="M6 19c0 1.1.9 2 2 2h8c1.1 0 2-.9 2-2V7H6v12zM19 4h-3.5l-1-1h-5l-1 1H5v2h14V4z"/></svg>
<svg class="ab" style="left:2729.70px;top:818.60px;" width="48" height="48" viewBox="0 0 24 24"><path fill="#1c1b1f" d="M20 9H4v2h16V9zM4 15h16v-2H4v2z"/></svg>
<div class="row" style="left:1909.7px;top:887.8px"></div>
<div class="ib fo" style="left:1915.7px;top:894.8px"></div>
<svg class="ab" style="left:1931.20px;top:910.30px;" width="42" height="42" viewBox="0 0 24 24"><path fill="#ff9800" d="M10 4H4c-1.1 0-1.99.9-1.99 2L2 18c0 1.1.9 2 2 2h16c1.1 0 2-.9 2-2V8c0-1.1-.9-2-2-2h-8l-2-2z"/></svg>
<div class="rl" style="left:2003.2px;top:887.8px"><span class="l" style="width:84.30px;transform:scaleX(1.03)">test-data</span></div>
<div class="cb" style="left:2415.2px;top:903.7px;width:55px;height:55px;background:#efeff1"></div>
<svg class="ab" style="left:2424.20px;top:913.50px;" width="37" height="37" viewBox="0 0 24 24"><path fill="#757575" d="M19 3h-4.18C14.40 1.84 13.30 1 12 1S9.60 1.84 9.18 3H5c-1.10 0-2 .900-2 2v14c0 1.10.900 2 2 2h14c1.10 0 2-.900 2-2V5c0-1.10-.900-2-2-2zm-7-.250c.410 0 .750.34.750.75s-.340.75-.750.75-.750-.340-.750-.750.34-.750.75-.750zM19 19H5V5h14v14zM15.08 11.03l-2.12-2.12L7 14.86V17h2.10l5.98-5.97zM16.85 9.27c.200-.200.20-.510 0-.710l-1.41-1.41c-.200-.200-.510-.200-.710 0l-1.06 1.06 2.12 2.12 1.06-1.06z"/></svg>
<div class="cb" style="left:2475.5px;top:901.7px;width:59px;height:59px;background:#efeff1"></div>
<svg class="ab" style="left:2484.00px;top:911.00px;" width="42" height="42" viewBox="0 0 24 24"><path fill="#212121" d="M22 5.18L10.59 16.6l-4.24-4.24 1.41-1.41 2.83 2.83 10-10L22 5.18zM19.79 10.22c.13.57.21 1.17.21 1.78 0 4.42-3.58 8-8 8s-8-3.58-8-8 3.58-8 8-8c1.58 0 3.04.46 4.28 1.25l1.44-1.44C16.1 2.67 14.13 2 12 2 6.48 2 2 6.48 2 12s4.48 10 10 10 10-4.48 10-10c0-1.19-.22-2.33-.6-3.39l-1.61 1.61z"/></svg>
<div class="cb" style="left:2539.8px;top:901.7px;width:59px;height:59px;background:#efeff1"></div>
<svg class="ab" style="left:2548.30px;top:911.00px;" width="42" height="42" viewBox="0 0 24 24"><path fill="#212121" d="M3 17.25V21h3.75L17.81 9.94l-3.75-3.75L3 17.25zM20.71 7.04c.39-.39.39-1.02 0-1.41l-2.34-2.34c-.39-.39-1.02-.39-1.41 0l-1.83 1.83 3.75 3.75 1.83-1.83z"/></svg>
<div class="cb" style="left:2604.2px;top:901.7px;width:59px;height:59px;background:#efeff1"></div>
<svg class="ab" style="left:2612.70px;top:911.00px;" width="42" height="42" viewBox="0 0 24 24"><path fill="#212121" d="M6 19c0 1.1.9 2 2 2h8c1.1 0 2-.9 2-2V7H6v12zM19 4h-3.5l-1-1h-5l-1 1H5v2h14V4z"/></svg>
<svg class="ab" style="left:2729.70px;top:907.80px;" width="48" height="48" viewBox="0 0 24 24"><path fill="#1c1b1f" d="M20 9H4v2h16V9zM4 15h16v-2H4v2z"/></svg>
<div class="card" style="left:20px;top:1192px;height:804px;border-color:#f8e49b"><div class="inner" style="height:772px"><div class="hd"></div><div class="dv"></div></div></div>
<div class="hb" style="left:64px;top:1240.5px;background:#faf7ec;border-color:#faf0cd"></div>
<svg class="ab" style="left:79.30px;top:1256.00px;" width="42" height="42" viewBox="0 0 24 24"><path fill="#f9db6d" d="M10 4H4c-1.1 0-1.99.9-1.99 2L2 18c0 1.1.9 2 2 2h16c1.1 0 2-.9 2-2V8c0-1.1-.9-2-2-2h-8l-2-2z"/></svg>
<div class="ht" style="left:164.5px;top:1249.5px">個人<span class="k" style="width:146.00px;transform:scaleX(0.82)">プロジェクト</span></div>
<div class="cb" style="left:615.1px;top:1235.5px;width:83px;height:83px;background:#f4f4f4"></div>
<svg class="ab" style="left:633.10px;top:1253.50px;" width="47" height="47" viewBox="0 0 24 24"><path fill="#212121" d="M3 17.25V21h3.75L17.81 9.94l-3.75-3.75L3 17.25zM20.71 7.04c.39-.39.39-1.02 0-1.41l-2.34-2.34c-.39-.39-1.02-.39-1.41 0l-1.83 1.83 3.75 3.75 1.83-1.83z"/></svg>
<div class="cb" style="left:716.1px;top:1235.5px;width:83px;height:83px;background:#f4f4f4"></div>
<svg class="ab" style="left:734.10px;top:1253.50px;" width="47" height="47" viewBox="0 0 24 24"><path fill="#212121" d="M6 19c0 1.1.9 2 2 2h8c1.1 0 2-.9 2-2V7H6v12zM19 4h-3.5l-1-1h-5l-1 1H5v2h14V4z"/></svg>
<div class="cb" style="left:812.8px;top:1235.5px;width:83px;height:83px;background:#faf7ec"></div>
<svg class="ab" style="left:830.80px;top:1253.50px;" width="47" height="47" viewBox="0 0 24 24"><path fill="#f9db6d" d="M19 13h-6v6h-2v-6H5v-2h6V5h2v6h6v2z"/></svg>
<div class="row" style="left:39px;top:1351.0px"></div>
<div class="ib fo" style="left:45px;top:1358.0px"></div>
<svg class="ab" style="left:60.50px;top:1373.50px;" width="42" height="42" viewBox="0 0 24 24"><path fill="#ff9800" d="M10 4H4c-1.1 0-1.99.9-1.99 2L2 18c0 1.1.9 2 2 2h16c1.1 0 2-.9 2-2V8c0-1.1-.9-2-2-2h-8l-2-2z"/></svg>
<div class="rl" style="left:132.5px;top:1351.0px">個人<span class="k" style="width:92.70px;transform:scaleX(0.82)">プロジェクト</span></div>
<div class="cb" style="left:544.5px;top:1366.9px;width:55px;height:55px;background:#efeff1"></div>
<svg class="ab" style="left:553.50px;top:1376.70px;" width="37" height="37" viewBox="0 0 24 24"><path fill="#757575" d="M19 3h-4.18C14.40 1.84 13.30 1 12 1S9.60 1.84 9.18 3H5c-1.10 0-2 .900-2 2v14c0 1.10.900 2 2 2h14c1.10 0 2-.900 2-2V5c0-1.10-.900-2-2-2zm-7-.250c.410 0 .750.34.750.75s-.340.75-.750.75-.750-.340-.750-.750.34-.750.75-.750zM19 19H5V5h14v14zM15.08 11.03l-2.12-2.12L7 14.86V17h2.10l5.98-5.97zM16.85 9.27c.200-.200.20-.510 0-.710l-1.41-1.41c-.200-.200-.510-.200-.710 0l-1.06 1.06 2.12 2.12 1.06-1.06z"/></svg>
<div class="cb" style="left:604.8px;top:1364.9px;width:59px;height:59px;background:#fef1e4"></div>
<svg class="ab" style="left:613.30px;top:1374.20px;" width="42" height="42" viewBox="0 0 24 24"><path fill="#fb8c00" d="M22 5.18L10.59 16.6l-4.24-4.24 1.41-1.41 2.83 2.83 10-10L22 5.18zM19.79 10.22c.13.57.21 1.17.21 1.78 0 4.42-3.58 8-8 8s-8-3.58-8-8 3.58-8 8-8c1.58 0 3.04.46 4.28 1.25l1.44-1.44C16.1 2.67 14.13 2 12 2 6.48 2 2 6.48 2 12s4.48 10 10 10 10-4.48 10-10c0-1.19-.22-2.33-.6-3.39l-1.61 1.61z"/></svg>
<div class="cb" style="left:669.1px;top:1364.9px;width:59px;height:59px;background:#efeff1"></div>
<svg class="ab" style="left:677.60px;top:1374.20px;" width="42" height="42" viewBox="0 0 24 24"><path fill="#212121" d="M3 17.25V21h3.75L17.81 9.94l-3.75-3.75L3 17.25zM20.71 7.04c.39-.39.39-1.02 0-1.41l-2.34-2.34c-.39-.39-1.02-.39-1.41 0l-1.83 1.83 3.75 3.75 1.83-1.83z"/></svg>
<div class="cb" style="left:733.5px;top:1364.9px;width:59px;height:59px;background:#efeff1"></div>
<svg class="ab" style="left:742.00px;top:1374.20px;" width="42" height="42" viewBox="0 0 24 24"><path fill="#212121" d="M6 19c0 1.1.9 2 2 2h8c1.1 0 2-.9 2-2V7H6v12zM19 4h-3.5l-1-1h-5l-1 1H5v2h14V4z"/></svg>
<svg class="ab" style="left:859.00px;top:1371.00px;" width="48" height="48" viewBox="0 0 24 24"><path fill="#1c1b1f" d="M20 9H4v2h16V9zM4 15h16v-2H4v2z"/></svg>
<div class="row" style="left:39px;top:1440.2px"></div>
<div class="ib fi" style="left:45px;top:1447.2px"></div>
<svg class="ab" style="left:65.50px;top:1467.70px;" width="32" height="32" viewBox="0 0 24 24"><path fill="#607d8b" d="M14 2H6c-1.1 0-1.99.9-1.99 2L4 20c0 1.1.89 2 1.99 2H18c1.1 0 2-.9 2-2V8l-6-6zm2 16H8v-2h8v2zm0-4H8v-2h8v2zm-3-5V3.5L18.5 9H13z"/></svg>
<div class="rl" style="left:132.5px;top:1440.2px"><span class="k" style="width:98.38px;transform:scaleX(0.86)">アイデアメモ</span><span class="l" style="width:29.02px;transform:scaleX(1.03)">.txt</span></div>
<div class="cb" style="left:544.5px;top:1456.1px;width:55px;height:55px;background:#efeff1"></div>
<svg class="ab" style="left:553.50px;top:1465.90px;" width="37" height="37" viewBox="0 0 24 24"><path fill="#757575" d="M19 3h-4.18C14.40 1.84 13.30 1 12 1S9.60 1.84 9.18 3H5c-1.10 0-2 .900-2 2v14c0 1.10.900 2 2 2h14c1.10 0 2-.900 2-2V5c0-1.10-.900-2-2-2zm-7-.250c.410 0 .750.34.750.75s-.340.75-.750.75-.750-.340-.750-.750.34-.750.75-.750zM19 19H5V5h14v14zM15.08 11.03l-2.12-2.12L7 14.86V17h2.10l5.98-5.97zM16.85 9.27c.200-.200.20-.510 0-.710l-1.41-1.41c-.200-.200-.510-.200-.710 0l-1.06 1.06 2.12 2.12 1.06-1.06z"/></svg>
<div class="cb" style="left:604.8px;top:1454.1px;width:59px;height:59px;background:#efeff1"></div>
<svg class="ab" style="left:613.30px;top:1463.40px;" width="42" height="42" viewBox="0 0 24 24"><path fill="#212121" d="M22 5.18L10.59 16.6l-4.24-4.24 1.41-1.41 2.83 2.83 10-10L22 5.18zM19.79 10.22c.13.57.21 1.17.21 1.78 0 4.42-3.58 8-8 8s-8-3.58-8-8 3.58-8 8-8c1.58 0 3.04.46 4.28 1.25l1.44-1.44C16.1 2.67 14.13 2 12 2 6.48 2 2 6.48 2 12s4.48 10 10 10 10-4.48 10-10c0-1.19-.22-2.33-.6-3.39l-1.61 1.61z"/></svg>
<div class="cb" style="left:669.1px;top:1454.1px;width:59px;height:59px;background:#efeff1"></div>
<svg class="ab" style="left:677.60px;top:1463.40px;" width="42" height="42" viewBox="0 0 24 24"><path fill="#212121" d="M3 17.25V21h3.75L17.81 9.94l-3.75-3.75L3 17.25zM20.71 7.04c.39-.39.39-1.02 0-1.41l-2.34-2.34c-.39-.39-1.02-.39-1.41 0l-1.83 1.83 3.75 3.75 1.83-1.83z"/></svg>
<div class="cb" style="left:733.5px;top:1454.1px;width:59px;height:59px;background:#efeff1"></div>
<svg class="ab" style="left:742.00px;top:1463.40px;" width="42" height="42" viewBox="0 0 24 24"><path fill="#212121" d="M6 19c0 1.1.9 2 2 2h8c1.1 0 2-.9 2-2V7H6v12zM19 4h-3.5l-1-1h-5l-1 1H5v2h14V4z"/></svg>
<svg class="ab" style="left:859.00px;top:1460.20px;" width="48" height="48" viewBox="0 0 24 24"><path fill="#1c1b1f" d="M20 9H4v2h16V9zM4 15h16v-2H4v2z"/></svg>
<div class="row" style="left:39px;top:1529.4px"></div>
<div class="ib fi" style="left:45px;top:1536.4px"></div>
<svg class="ab" style="left:65.50px;top:1556.90px;" width="32" height="32" viewBox="0 0 24 24"><path fill="#607d8b" d="M14 2H6c-1.1 0-1.99.9-1.99 2L4 20c0 1.1.89 2 1.99 2H18c1.1 0 2-.9 2-2V8l-6-6zm2 16H8v-2h8v2zm0-4H8v-2h8v2zm-3-5V3.5L18.5 9H13z"/></svg>
<div class="rl" style="left:132.5px;top:1529.4px"><span class="l" style="width:92.90px;transform:scaleX(0.97)">TODO.md</span></div>
<div class="cb" style="left:544.5px;top:1545.3px;width:55px;height:55px;background:#efeff1"></div>
<svg class="ab" style="left:553.50px;top:1555.10px;" width="37" height="37" viewBox="0 0 24 24"><path fill="#757575" d="M19 3h-4.18C14.40 1.84 13.30 1 12 1S9.60 1.84 9.18 3H5c-1.10 0-2 .900-2 2v14c0 1.10.900 2 2 2h14c1.10 0 2-.900 2-2V5c0-1.10-.900-2-2-2zm-7-.250c.410 0 .750.34.750.75s-.340.75-.750.75-.750-.340-.750-.750.34-.750.75-.750zM19 19H5V5h14v14zM15.08 11.03l-2.12-2.12L7 14.86V17h2.10l5.98-5.97zM16.85 9.27c.200-.200.20-.510 0-.710l-1.41-1.41c-.200-.200-.510-.200-.710 0l-1.06 1.06 2.12 2.12 1.06-1.06z"/></svg>
<div class="cb" style="left:604.8px;top:1543.3px;width:59px;height:59px;background:#efeff1"></div>
<svg class="ab" style="left:613.30px;top:1552.60px;" width="42" height="42" viewBox="0 0 24 24"><path fill="#212121" d="M22 5.18L10.59 16.6l-4.24-4.24 1.41-1.41 2.83 2.83 10-10L22 5.18zM19.79 10.22c.13.57.21 1.17.21 1.78 0 4.42-3.58 8-8 8s-8-3.58-8-8 3.58-8 8-8c1.58 0 3.04.46 4.28 1.25l1.44-1.44C16.1 2.67 14.13 2 12 2 6.48 2 2 6.48 2 12s4.48 10 10 10 10-4.48 10-10c0-1.19-.22-2.33-.6-3.39l-1.61 1.61z"/></svg>
<div class="cb" style="left:669.1px;top:1543.3px;width:59px;height:59px;background:#efeff1"></div>
<svg class="ab" style="left:677.60px;top:1552.60px;" width="42" height="42" viewBox="0 0 24 24"><path fill="#212121" d="M3 17.25V21h3.75L17.81 9.94l-3.75-3.75L3 17.25zM20.71 7.04c.39-.39.39-1.02 0-1.41l-2.34-2.34c-.39-.39-1.02-.39-1.41 0l-1.83 1.83 3.75 3.75 1.83-1.83z"/></svg>
<div class="cb" style="left:733.5px;top:1543.3px;width:59px;height:59px;background:#efeff1"></div>
<svg class="ab" style="left:742.00px;top:1552.60px;" width="42" height="42" viewBox="0 0 24 24"><path fill="#212121" d="M6 19c0 1.1.9 2 2 2h8c1.1 0 2-.9 2-2V7H6v12zM19 4h-3.5l-1-1h-5l-1 1H5v2h14V4z"/></svg>
<svg class="ab" style="left:859.00px;top:1549.40px;" width="48" height="48" viewBox="0 0 24 24"><path fill="#1c1b1f" d="M20 9H4v2h16V9zM4 15h16v-2H4v2z"/></svg>
<div class="row" style="left:39px;top:1618.6px"></div>
<div class="ib fo" style="left:45px;top:1625.6px"></div>
<svg class="ab" style="left:60.50px;top:1641.10px;" width="42" height="42" viewBox="0 0 24 24"><path fill="#ff9800" d="M10 4H4c-1.1 0-1.99.9-1.99 2L2 18c0 1.1.9 2 2 2h16c1.1 0 2-.9 2-2V8c0-1.1-.9-2-2-2h-8l-2-2z"/></svg>
<div class="rl" style="left:132.5px;top:1618.6px">学習資料</div>
<div class="cb" style="left:544.5px;top:1634.5px;width:55px;height:55px;background:#efeff1"></div>
<svg class="ab" style="left:553.50px;top:1644.30px;" width="37" height="37" viewBox="0 0 24 24"><path fill="#757575" d="M19 3h-4.18C14.40 1.84 13.30 1 12 1S9.60 1.84 9.18 3H5c-1.10 0-2 .900-2 2v14c0 1.10.900 2 2 2h14c1.10 0 2-.900 2-2V5c0-1.10-.900-2-2-2zm-7-.250c.410 0 .750.34.750.75s-.340.75-.750.75-.750-.340-.750-.750.34-.750.75-.750zM19 19H5V5h14v14zM15.08 11.03l-2.12-2.12L7 14.86V17h2.10l5.98-5.97zM16.85 9.27c.200-.200.20-.510 0-.710l-1.41-1.41c-.200-.200-.510-.200-.710 0l-1.06 1.06 2.12 2.12 1.06-1.06z"/></svg>
<div class="cb" style="left:604.8px;top:1632.5px;width:59px;height:59px;background:#efeff1"></div>
<svg class="ab" style="left:613.30px;top:1641.80px;" width="42" height="42" viewBox="0 0 24 24"><path fill="#212121" d="M22 5.18L10.59 16.6l-4.24-4.24 1.41-1.41 2.83 2.83 10-10L22 5.18zM19.79 10.22c.13.57.21 1.17.21 1.78 0 4.42-3.58 8-8 8s-8-3.58-8-8 3.58-8 8-8c1.58 0 3.04.46 4.28 1.25l1.44-1.44C16.1 2.67 14.13 2 12 2 6.48 2 2 6.48 2 12s4.48 10 10 10 10-4.48 10-10c0-1.19-.22-2.33-.6-3.39l-1.61 1.61z"/></svg>
<div class="cb" style="left:669.1px;top:1632.5px;width:59px;height:59px;background:#efeff1"></div>
<svg class="ab" style="left:677.60px;top:1641.80px;" width="42" height="42" viewBox="0 0 24 24"><path fill="#212121" d="M3 17.25V21h3.75L17.81 9.94l-3.75-3.75L3 17.25zM20.71 7.04c.39-.39.39-1.02 0-1.41l-2.34-2.34c-.39-.39-1.02-.39-1.41 0l-1.83 1.83 3.75 3.75 1.83-1.83z"/></svg>
<div class="cb" style="left:733.5px;top:1632.5px;width:59px;height:59px;background:#efeff1"></div>
<svg class="ab" style="left:742.00px;top:1641.80px;" width="42" height="42" viewBox="0 0 24 24"><path fill="#212121" d="M6 19c0 1.1.9 2 2 2h8c1.1 0 2-.9 2-2V7H6v12zM19 4h-3.5l-1-1h-5l-1 1H5v2h14V4z"/></svg>
<svg class="ab" style="left:859.00px;top:1638.60px;" width="48" height="48" viewBox="0 0 24 24"><path fill="#1c1b1f" d="M20 9H4v2h16V9zM4 15h16v-2H4v2z"/></svg>
<div class="row" style="left:39px;top:1707.8px"></div>
<div class="ib fi" style="left:45px;top:1714.8px"></div>
<svg class="ab" style="left:65.5px;top:1735.3px" width="32" height="32" viewBox="0 0 24 24"><path fill="#f44336" d="M20 2H8c-1.10 0-2 .900-2 2v12c0 1.10.900 2 2 2h12c1.10 0 2-.900 2-2V4c0-1.10-.900-2-2-2zM4 6H2v14c0 1.10.900 2 2 2h14v-2H4V6z"/><text x="14" y="13" text-anchor="middle" font-family="Liberation Sans, sans-serif" font-weight="bold" font-size="7.2" fill="#fff" textLength="13.6" lengthAdjust="spacingAndGlyphs">PDF</text></svg>
<div class="rl" style="left:132.5px;top:1707.8px"><span class="k" style="width:81.19px;transform:scaleX(0.84)">プログラム</span>入門<span class="l" style="width:36.21px;transform:scaleX(1.03)">.pdf</span></div>
<div class="cb" style="left:544.5px;top:1723.7px;width:55px;height:55px;background:#efeff1"></div>
<svg class="ab" style="left:553.50px;top:1733.50px;" width="37" height="37" viewBox="0 0 24 24"><path fill="#757575" d="M19 3h-4.18C14.40 1.84 13.30 1 12 1S9.60 1.84 9.18 3H5c-1.10 0-2 .900-2 2v14c0 1.10.900 2 2 2h14c1.10 0 2-.900 2-2V5c0-1.10-.900-2-2-2zm-7-.250c.410 0 .750.34.750.75s-.340.75-.750.75-.750-.340-.750-.750.34-.750.75-.750zM19 19H5V5h14v14zM15.08 11.03l-2.12-2.12L7 14.86V17h2.10l5.98-5.97zM16.85 9.27c.200-.200.20-.510 0-.710l-1.41-1.41c-.200-.200-.510-.200-.710 0l-1.06 1.06 2.12 2.12 1.06-1.06z"/></svg>
<div class="cb" style="left:604.8px;top:1721.7px;width:59px;height:59px;background:#efeff1"></div>
<svg class="ab" style="left:613.30px;top:1731.00px;" width="42" height="42" viewBox="0 0 24 24"><path fill="#212121" d="M22 5.18L10.59 16.6l-4.24-4.24 1.41-1.41 2.83 2.83 10-10L22 5.18zM19.79 10.22c.13.57.21 1.17.21 1.78 0 4.42-3.58 8-8 8s-8-3.58-8-8 3.58-8 8-8c1.58 0 3.04.46 4.28 1.25l1.44-1.44C16.1 2.67 14.13 2 12 2 6.48 2 2 6.48 2 12s4.48 10 10 10 10-4.48 10-10c0-1.19-.22-2.33-.6-3.39l-1.61 1.61z"/></svg>
<div class="cb" style="left:669.1px;top:1721.7px;width:59px;height:59px;background:#efeff1"></div>
<svg class="ab" style="left:677.60px;top:1731.00px;" width="42" height="42" viewBox="0 0 24 24"><path fill="#212121" d="M3 17.25V21h3.75L17.81 9.94l-3.75-3.75L3 17.25zM20.71 7.04c.39-.39.39-1.02 0-1.41l-2.34-2.34c-.39-.39-1.02-.39-1.41 0l-1.83 1.83 3.75 3.75 1.83-1.83z"/></svg>
<div class="cb" style="left:733.5px;top:1721.7px;width:59px;height:59px;background:#efeff1"></div>
<svg class="ab" style="left:742.00px;top:1731.00px;" width="42" height="42" viewBox="0 0 24 24"><path fill="#212121" d="M6 19c0 1.1.9 2 2 2h8c1.1 0 2-.9 2-2V7H6v12zM19 4h-3.5l-1-1h-5l-1 1H5v2h14V4z"/></svg>
<svg class="ab" style="left:859.00px;top:1727.80px;" width="48" height="48" viewBox="0 0 24 24"><path fill="#1c1b1f" d="M20 9H4v2h16V9zM4 15h16v-2H4v2z"/></svg>
<div class="card" style="left:955px;top:1192px;height:804px;border-color:#f47c7c"><div class="inner" style="height:772px"><div class="hd"></div><div class="dv"></div></div></div>
<div class="hb" style="left:999px;top:1240.5px;background:#f9e8e8;border-color:#f6c0c0"></div>
<svg class="ab" style="left:1014.30px;top:1256.00px;" width="42" height="42" viewBox="0 0 24 24"><path fill="#ef4444" d="M10 4H4c-1.1 0-1.99.9-1.99 2L2 18c0 1.1.9 2 2 2h16c1.1 0 2-.9 2-2V8c0-1.1-.9-2-2-2h-8l-2-2z"/></svg>
<div class="ht" style="left:1099.5px;top:1249.5px"><span class="bk"></span>資料</div>
<div class="cb" style="left:1550.1px;top:1235.5px;width:83px;height:83px;background:#f4f4f4"></div>
<svg class="ab" style="left:1568.10px;top:1253.50px;" width="47" height="47" viewBox="0 0 24 24"><path fill="#212121" d="M3 17.25V21h3.75L17.81 9.94l-3.75-3.75L3 17.25zM20.71 7.04c.39-.39.39-1.02 0-1.41l-2.34-2.34c-.39-.39-1.02-.39-1.41 0l-1.83 1.83 3.75 3.75 1.83-1.83z"/></svg>
<div class="cb" style="left:1651.1px;top:1235.5px;width:83px;height:83px;background:#f4f4f4"></div>
<svg class="ab" style="left:1669.10px;top:1253.50px;" width="47" height="47" viewBox="0 0 24 24"><path fill="#212121" d="M6 19c0 1.1.9 2 2 2h8c1.1 0 2-.9 2-2V7H6v12zM19 4h-3.5l-1-1h-5l-1 1H5v2h14V4z"/></svg>
<div class="cb" style="left:1747.8px;top:1235.5px;width:83px;height:83px;background:#f9e8e8"></div>
<svg class="ab" style="left:1765.80px;top:1253.50px;" width="47" height="47" viewBox="0 0 24 24"><path fill="#ef4444" d="M19 13h-6v6h-2v-6H5v-2h6V5h2v6h6v2z"/></svg>
<div class="row" style="left:974px;top:1351.0px"></div>
<div class="ib fo" style="left:980px;top:1358.0px"></div>
<svg class="ab" style="left:995.50px;top:1373.50px;" width="42" height="42" viewBox="0 0 24 24"><path fill="#ff9800" d="M10 4H4c-1.1 0-1.99.9-1.99 2L2 18c0 1.1.9 2 2 2h16c1.1 0 2-.9 2-2V8c0-1.1-.9-2-2-2h-8l-2-2z"/></svg>
<div class="rl" style="left:1067.5px;top:1351.0px">資料</div>
<div class="cb" style="left:1479.5px;top:1366.9px;width:55px;height:55px;background:#efeff1"></div>
<svg class="ab" style="left:1488.50px;top:1376.70px;" width="37" height="37" viewBox="0 0 24 24"><path fill="#757575" d="M19 3h-4.18C14.40 1.84 13.30 1 12 1S9.60 1.84 9.18 3H5c-1.10 0-2 .900-2 2v14c0 1.10.900 2 2 2h14c1.10 0 2-.900 2-2V5c0-1.10-.900-2-2-2zm-7-.250c.410 0 .750.34.750.75s-.340.75-.750.75-.750-.340-.750-.750.34-.750.75-.750zM19 19H5V5h14v14zM15.08 11.03l-2.12-2.12L7 14.86V17h2.10l5.98-5.97zM16.85 9.27c.200-.200.20-.510 0-.710l-1.41-1.41c-.200-.200-.510-.200-.710 0l-1.06 1.06 2.12 2.12 1.06-1.06z"/></svg>
<div class="cb" style="left:1539.8px;top:1364.9px;width:59px;height:59px;background:#efeff1"></div>
<svg class="ab" style="left:1548.30px;top:1374.20px;" width="42" height="42" viewBox="0 0 24 24"><path fill="#212121" d="M22 5.18L10.59 16.6l-4.24-4.24 1.41-1.41 2.83 2.83 10-10L22 5.18zM19.79 10.22c.13.57.21 1.17.21 1.78 0 4.42-3.58 8-8 8s-8-3.58-8-8 3.58-8 8-8c1.58 0 3.04.46 4.28 1.25l1.44-1.44C16.1 2.67 14.13 2 12 2 6.48 2 2 6.48 2 12s4.48 10 10 10 10-4.48 10-10c0-1.19-.22-2.33-.6-3.39l-1.61 1.61z"/></svg>
<div class="cb" style="left:1604.1px;top:1364.9px;width:59px;height:59px;background:#efeff1"></div>
<svg class="ab" style="left:1612.60px;top:1374.20px;" width="42" height="42" viewBox="0 0 24 24"><path fill="#212121" d="M3 17.25V21h3.75L17.81 9.94l-3.75-3.75L3 17.25zM20.71 7.04c.39-.39.39-1.02 0-1.41l-2.34-2.34c-.39-.39-1.02-.39-1.41 0l-1.83 1.83 3.75 3.75 1.83-1.83z"/></svg>
<div class="cb" style="left:1668.5px;top:1364.9px;width:59px;height:59px;background:#efeff1"></div>
<svg class="ab" style="left:1677.00px;top:1374.20px;" width="42" height="42" viewBox="0 0 24 24"><path fill="#212121" d="M6 19c0 1.1.9 2 2 2h8c1.1 0 2-.9 2-2V7H6v12zM19 4h-3.5l-1-1h-5l-1 1H5v2h14V4z"/></svg>
<svg class="ab" style="left:1794.00px;top:1371.00px;" width="48" height="48" viewBox="0 0 24 24"><path fill="#1c1b1f" d="M20 9H4v2h16V9zM4 15h16v-2H4v2z"/></svg>
<div class="row" style="left:974px;top:1440.2px"></div>
<div class="ib fi" style="left:980px;top:1447.2px"></div>
<svg class="ab" style="left:1000.5px;top:1467.7px" width="32" height="32" viewBox="0 0 24 24"><path fill="#f44336" d="M20 2H8c-1.10 0-2 .900-2 2v12c0 1.10.900 2 2 2h12c1.10 0 2-.900 2-2V4c0-1.10-.900-2-2-2zM4 6H2v14c0 1.10.900 2 2 2h14v-2H4V6z"/><text x="14" y="13" text-anchor="middle" font-family="Liberation Sans, sans-serif" font-weight="bold" font-size="7.2" fill="#fff" textLength="13.6" lengthAdjust="spacingAndGlyphs">PDF</text></svg>
<div class="rl" style="left:1067.5px;top:1440.2px">業界<span class="k" style="width:63.46px;transform:scaleX(0.83)">レポート</span><span class="l" style="width:36.64px;transform:scaleX(1.04)">.pdf</span></div>
<div class="cb" style="left:1479.5px;top:1456.1px;width:55px;height:55px;background:#efeff1"></div>
<svg class="ab" style="left:1488.50px;top:1465.90px;" width="37" height="37" viewBox="0 0 24 24"><path fill="#757575" d="M19 3h-4.18C14.40 1.84 13.30 1 12 1S9.60 1.84 9.18 3H5c-1.10 0-2 .900-2 2v14c0 1.10.900 2 2 2h14c1.10 0 2-.900 2-2V5c0-1.10-.900-2-2-2zm-7-.250c.410 0 .750.34.750.75s-.340.75-.750.75-.750-.340-.750-.750.34-.750.75-.750zM19 19H5V5h14v14zM15.08 11.03l-2.12-2.12L7 14.86V17h2.10l5.98-5.97zM16.85 9.27c.200-.200.20-.510 0-.710l-1.41-1.41c-.200-.200-.510-.200-.710 0l-1.06 1.06 2.12 2.12 1.06-1.06z"/></svg>
<div class="cb" style="left:1539.8px;top:1454.1px;width:59px;height:59px;background:#efeff1"></div>
<svg class="ab" style="left:1548.30px;top:1463.40px;" width="42" height="42" viewBox="0 0 24 24"><path fill="#212121" d="M22 5.18L10.59 16.6l-4.24-4.24 1.41-1.41 2.83 2.83 10-10L22 5.18zM19.79 10.22c.13.57.21 1.17.21 1.78 0 4.42-3.58 8-8 8s-8-3.58-8-8 3.58-8 8-8c1.58 0 3.04.46 4.28 1.25l1.44-1.44C16.1 2.67 14.13 2 12 2 6.48 2 2 6.48 2 12s4.48 10 10 10 10-4.48 10-10c0-1.19-.22-2.33-.6-3.39l-1.61 1.61z"/></svg>
<div class="cb" style="left:1604.1px;top:1454.1px;width:59px;height:59px;background:#efeff1"></div>
<svg class="ab" style="left:1612.60px;top:1463.40px;" width="42" height="42" viewBox="0 0 24 24"><path fill="#212121" d="M3 17.25V21h3.75L17.81 9.94l-3.75-3.75L3 17.25zM20.71 7.04c.39-.39.39-1.02 0-1.41l-2.34-2.34c-.39-.39-1.02-.39-1.41 0l-1.83 1.83 3.75 3.75 1.83-1.83z"/></svg>
<div class="cb" style="left:1668.5px;top:1454.1px;width:59px;height:59px;background:#efeff1"></div>
<svg class="ab" style="left:1677.00px;top:1463.40px;" width="42" height="42" viewBox="0 0 24 24"><path fill="#212121" d="M6 19c0 1.1.9 2 2 2h8c1.1 0 2-.9 2-2V7H6v12zM19 4h-3.5l-1-1h-5l-1 1H5v2h14V4z"/></svg>
<svg class="ab" style="left:1794.00px;top:1460.20px;" width="48" height="48" viewBox="0 0 24 24"><path fill="#1c1b1f" d="M20 9H4v2h16V9zM4 15h16v-2H4v2z"/></svg>
<div class="row" style="left:974px;top:1529.4px"></div>
<div class="ib fi" style="left:980px;top:1536.4px"></div>
<svg class="ab" style="left:1000.50px;top:1556.90px;" width="32" height="32" viewBox="0 0 24 24"><path fill="#607d8b" d="M14 2H6c-1.1 0-1.99.9-1.99 2L4 20c0 1.1.89 2 1.99 2H18c1.1 0 2-.9 2-2V8l-6-6zm2 16H8v-2h8v2zm0-4H8v-2h8v2zm-3-5V3.5L18.5 9H13z"/></svg>
<div class="rl" style="left:1067.5px;top:1529.4px">参考記事<span class="k" style="width:48.08px;transform:scaleX(0.87)">リンク</span><span class="l" style="width:29.72px;transform:scaleX(1.06)">.txt</span></div>
<div class="cb" style="left:1479.5px;top:1545.3px;width:55px;height:55px;background:#efeff1"></div>
<svg class="ab" style="left:1488.50px;top:1555.10px;" width="37" height="37" viewBox="0 0 24 24"><path fill="#757575" d="M19 3h-4.18C14.40 1.84 13.30 1 12 1S9.60 1.84 9.18 3H5c-1.10 0-2 .900-2 2v14c0 1.10.900 2 2 2h14c1.10 0 2-.900 2-2V5c0-1.10-.900-2-2-2zm-7-.250c.410 0 .750.34.750.75s-.340.75-.750.75-.750-.340-.750-.750.34-.750.75-.750zM19 19H5V5h14v14zM15.08 11.03l-2.12-2.12L7 14.86V17h2.10l5.98-5.97zM16.85 9.27c.200-.200.20-.510 0-.710l-1.41-1.41c-.200-.200-.510-.200-.710 0l-1.06 1.06 2.12 2.12 1.06-1.06z"/></svg>
<div class="cb" style="left:1539.8px;top:1543.3px;width:59px;height:59px;background:#efeff1"></div>
<svg class="ab" style="left:1548.30px;top:1552.60px;" width="42" height="42" viewBox="0 0 24 24"><path fill="#212121" d="M22 5.18L10.59 16.6l-4.24-4.24 1.41-1.41 2.83 2.83 10-10L22 5.18zM19.79 10.22c.13.57.21 1.17.21 1.78 0 4.42-3.58 8-8 8s-8-3.58-8-8 3.58-8 8-8c1.58 0 3.04.46 4.28 1.25l1.44-1.44C16.1 2.67 14.13 2 12 2 6.48 2 2 6.48 2 12s4.48 10 10 10 10-4.48 10-10c0-1.19-.22-2.33-.6-3.39l-1.61 1.61z"/></svg>
<div class="cb" style="left:1604.1px;top:1543.3px;width:59px;height:59px;background:#efeff1"></div>
<svg class="ab" style="left:1612.60px;top:1552.60px;" width="42" height="42" viewBox="0 0 24 24"><path fill="#212121" d="M3 17.25V21h3.75L17.81 9.94l-3.75-3.75L3 17.25zM20.71 7.04c.39-.39.39-1.02 0-1.41l-2.34-2.34c-.39-.39-1.02-.39-1.41 0l-1.83 1.83 3.75 3.75 1.83-1.83z"/></svg>
<div class="cb" style="left:1668.5px;top:1543.3px;width:59px;height:59px;background:#efeff1"></div>
<svg class="ab" style="left:1677.00px;top:1552.60px;" width="42" height="42" viewBox="0 0 24 24"><path fill="#212121" d="M6 19c0 1.1.9 2 2 2h8c1.1 0 2-.9 2-2V7H6v12zM19 4h-3.5l-1-1h-5l-1 1H5v2h14V4z"/></svg>
<svg class="ab" style="left:1794.00px;top:1549.40px;" width="48" height="48" viewBox="0 0 24 24"><path fill="#1c1b1f" d="M20 9H4v2h16V9zM4 15h16v-2H4v2z"/></svg>
<div class="row" style="left:974px;top:1618.6px"></div>
<div class="ib fi" style="left:980px;top:1625.6px"></div>
<svg class="ab" style="left:991px;top:1636.3px" width="24" height="32" viewBox="0 0 384 512"><path fill="#388e3c" d="M369.90 97.90L286 14C277 5 264.80-.100 252.10-.100H48C21.50 0 0 21.50 0 48v416c0 26.50 21.50 48 48 48h288c26.50 0 48-21.50 48-48V131.90c0-12.70-5.10-25-14.10-34zM332.10 128H256V51.90l76.10 76.10zM48 464V48h160v104c0 13.30 10.70 24 24 24h104v288H48z"/><path fill="#388e3c" d="M240 40L344 144H240z"/><path d="M128 250 L256 400 M256 250 L128 400" stroke="#388e3c" stroke-width="50" stroke-linecap="round" fill="none"/></svg>
<div class="rl" style="left:1067.5px;top:1618.6px">市場調査<span class="l" style="width:40.50px;transform:scaleX(0.96)">.xlsx</span></div>
<div class="cb" style="left:1479.5px;top:1634.5px;width:55px;height:55px;background:#fef1e4"></div>
<svg class="ab" style="left:1488.50px;top:1644.30px;" width="37" height="37" viewBox="0 0 24 24"><path fill="#fb8c00" d="M19 3h-4.18C14.40 1.84 13.30 1 12 1S9.60 1.84 9.18 3H5c-1.10 0-2 .900-2 2v14c0 1.10.900 2 2 2h14c1.10 0 2-.900 2-2V5c0-1.10-.900-2-2-2zm-7-.250c.410 0 .750.34.750.75s-.340.75-.750.75-.750-.340-.750-.750.34-.750.75-.750zM19 19H5V5h14v14zM15.08 11.03l-2.12-2.12L7 14.86V17h2.10l5.98-5.97zM16.85 9.27c.200-.200.20-.510 0-.710l-1.41-1.41c-.200-.200-.510-.200-.710 0l-1.06 1.06 2.12 2.12 1.06-1.06z"/></svg>
<div class="cb" style="left:1539.8px;top:1632.5px;width:59px;height:59px;background:#efeff1"></div>
<svg class="ab" style="left:1548.30px;top:1641.80px;" width="42" height="42" viewBox="0 0 24 24"><path fill="#212121" d="M22 5.18L10.59 16.6l-4.24-4.24 1.41-1.41 2.83 2.83 10-10L22 5.18zM19.79 10.22c.13.57.21 1.17.21 1.78 0 4.42-3.58 8-8 8s-8-3.58-8-8 3.58-8 8-8c1.58 0 3.04.46 4.28 1.25l1.44-1.44C16.1 2.67 14.13 2 12 2 6.48 2 2 6.48 2 12s4.48 10 10 10 10-4.48 10-10c0-1.19-.22-2.33-.6-3.39l-1.61 1.61z"/></svg>
<div class="cb" style="left:1604.1px;top:1632.5px;width:59px;height:59px;background:#efeff1"></div>
<svg class="ab" style="left:1612.60px;top:1641.80px;" width="42" height="42" viewBox="0 0 24 24"><path fill="#212121" d="M3 17.25V21h3.75L17.81 9.94l-3.75-3.75L3 17.25zM20.71 7.04c.39-.39.39-1.02 0-1.41l-2.34-2.34c-.39-.39-1.02-.39-1.41 0l-1.83 1.83 3.75 3.75 1.83-1.83z"/></svg>
<div class="cb" style="left:1668.5px;top:1632.5px;width:59px;height:59px;background:#efeff1"></div>
<svg class="ab" style="left:1677.00px;top:1641.80px;" width="42" height="42" viewBox="0 0 24 24"><path fill="#212121" d="M6 19c0 1.1.9 2 2 2h8c1.1 0 2-.9 2-2V7H6v12zM19 4h-3.5l-1-1h-5l-1 1H5v2h14V4z"/></svg>
<svg class="ab" style="left:1794.00px;top:1638.60px;" width="48" height="48" viewBox="0 0 24 24"><path fill="#1c1b1f" d="M20 9H4v2h16V9zM4 15h16v-2H4v2z"/></svg>
<div class="row" style="left:974px;top:1707.8px"></div>
<div class="ib fi" style="left:980px;top:1714.8px"></div>
<svg class="ab" style="left:991.5px;top:1726.3px" width="50" height="50" viewBox="0 0 50 50"><rect x="1" y="1" width="48" height="48" rx="6" fill="#eef0f2" stroke="#d9d9d9" stroke-width="2"/><g opacity=".62"><rect x="5" y="2.50" width="40" height="1.50" fill="#7f97b5"/><rect x="4" y="45.50" width="42" height="1.50" fill="#7f97b5"/><rect x="17" y="8.50" width="17" height="3" fill="#555"/><rect x="8" y="10" width="7" height="1" fill="#999"/><rect x="7" y="13.50" width="40" height="2" fill="#9db0ea"/><rect x="7" y="18" width="24" height="1.50" fill="#8fd3a8"/><rect x="7" y="20.50" width="2" height="2.20" fill="#ff9800"/><rect x="10.50" y="20.80" width="9" height="1.60" fill="#5b84c9"/><rect x="7" y="23.55" width="2" height="2.20" fill="#e57373"/><rect x="10.50" y="23.85" width="8" height="1.60" fill="#5b84c9"/><rect x="7" y="26.60" width="2" height="2.20" fill="#81c784"/><rect x="10.50" y="26.90" width="10" height="1.60" fill="#5b84c9"/><rect x="7" y="29.65" width="2" height="2.20" fill="#64a0e0"/><rect x="10.50" y="29.95" width="9" height="1.60" fill="#5b84c9"/><rect x="7" y="32.70" width="2" height="2.20" fill="#ff9800"/><rect x="10.50" y="33.00" width="7" height="1.60" fill="#5b84c9"/><rect x="7" y="35.75" width="2" height="2.20" fill="#e57373"/><rect x="10.50" y="36.05" width="10" height="1.60" fill="#5b84c9"/><rect x="7" y="38.80" width="2" height="2.20" fill="#81c784"/><rect x="10.50" y="39.10" width="10" height="1.60" fill="#5b84c9"/></g></svg>
<div class="rl" style="left:1067.5px;top:1707.8px"><span class="l" style="width:199.90px;transform:scaleX(1.05)">outlook_support.png</span></div>
<div class="cb" style="left:1479.5px;top:1723.7px;width:55px;height:55px;background:#efeff1"></div>
<svg class="ab" style="left:1488.50px;top:1733.50px;" width="37" height="37" viewBox="0 0 24 24"><path fill="#757575" d="M19 3h-4.18C14.40 1.84 13.30 1 12 1S9.60 1.84 9.18 3H5c-1.10 0-2 .900-2 2v14c0 1.10.900 2 2 2h14c1.10 0 2-.900 2-2V5c0-1.10-.900-2-2-2zm-7-.250c.410 0 .750.34.750.75s-.340.75-.750.75-.750-.340-.750-.750.34-.750.75-.750zM19 19H5V5h14v14zM15.08 11.03l-2.12-2.12L7 14.86V17h2.10l5.98-5.97zM16.85 9.27c.200-.200.20-.510 0-.710l-1.41-1.41c-.200-.200-.510-.200-.710 0l-1.06 1.06 2.12 2.12 1.06-1.06z"/></svg>
<div class="cb" style="left:1539.8px;top:1721.7px;width:59px;height:59px;background:#efeff1"></div>
<svg class="ab" style="left:1548.30px;top:1731.00px;" width="42" height="42" viewBox="0 0 24 24"><path fill="#212121" d="M22 5.18L10.59 16.6l-4.24-4.24 1.41-1.41 2.83 2.83 10-10L22 5.18zM19.79 10.22c.13.57.21 1.17.21 1.78 0 4.42-3.58 8-8 8s-8-3.58-8-8 3.58-8 8-8c1.58 0 3.04.46 4.28 1.25l1.44-1.44C16.1 2.67 14.13 2 12 2 6.48 2 2 6.48 2 12s4.48 10 10 10 10-4.48 10-10c0-1.19-.22-2.33-.6-3.39l-1.61 1.61z"/></svg>
<div class="cb" style="left:1604.1px;top:1721.7px;width:59px;height:59px;background:#efeff1"></div>
<svg class="ab" style="left:1612.60px;top:1731.00px;" width="42" height="42" viewBox="0 0 24 24"><path fill="#212121" d="M3 17.25V21h3.75L17.81 9.94l-3.75-3.75L3 17.25zM20.71 7.04c.39-.39.39-1.02 0-1.41l-2.34-2.34c-.39-.39-1.02-.39-1.41 0l-1.83 1.83 3.75 3.75 1.83-1.83z"/></svg>
<div class="cb" style="left:1668.5px;top:1721.7px;width:59px;height:59px;background:#efeff1"></div>
<svg class="ab" style="left:1677.00px;top:1731.00px;" width="42" height="42" viewBox="0 0 24 24"><path fill="#212121" d="M6 19c0 1.1.9 2 2 2h8c1.1 0 2-.9 2-2V7H6v12zM19 4h-3.5l-1-1h-5l-1 1H5v2h14V4z"/></svg>
<svg class="ab" style="left:1794.00px;top:1727.80px;" width="48" height="48" viewBox="0 0 24 24"><path fill="#1c1b1f" d="M20 9H4v2h16V9zM4 15h16v-2H4v2z"/></svg>
<div class="card" style="left:1890.7px;top:1192px;height:804px;border-color:#a9db5c"><div class="inner" style="height:772px"><div class="hd"></div><div class="dv"></div></div></div>
<div class="hb" style="left:1934.7px;top:1240.5px;background:#eef5e3;border-color:#d4ebb1"></div>
<svg class="ab" style="left:1950.00px;top:1256.00px;" width="42" height="42" viewBox="0 0 24 24"><path fill="#84cc16" d="M10 4H4c-1.1 0-1.99.9-1.99 2L2 18c0 1.1.9 2 2 2h16c1.1 0 2-.9 2-2V8c0-1.1-.9-2-2-2h-8l-2-2z"/></svg>
<div class="ht" style="left:2035.2px;top:1249.5px"><span class="l" style="width:207.00px;transform:scaleX(1.04)">Programming</span></div>
<div class="cb" style="left:2485.8px;top:1235.5px;width:83px;height:83px;background:#f4f4f4"></div>
<svg class="ab" style="left:2503.80px;top:1253.50px;" width="47" height="47" viewBox="0 0 24 24"><path fill="#212121" d="M3 17.25V21h3.75L17.81 9.94l-3.75-3.75L3 17.25zM20.71 7.04c.39-.39.39-1.02 0-1.41l-2.34-2.34c-.39-.39-1.02-.39-1.41 0l-1.83 1.83 3.75 3.75 1.83-1.83z"/></svg>
<div class="cb" style="left:2586.8px;top:1235.5px;width:83px;height:83px;background:#f4f4f4"></div>
<svg class="ab" style="left:2604.80px;top:1253.50px;" width="47" height="47" viewBox="0 0 24 24"><path fill="#212121" d="M6 19c0 1.1.9 2 2 2h8c1.1 0 2-.9 2-2V7H6v12zM19 4h-3.5l-1-1h-5l-1 1H5v2h14V4z"/></svg>
<div class="cb" style="left:2683.5px;top:1235.5px;width:83px;height:83px;background:#eef5e3"></div>
<svg class="ab" style="left:2701.50px;top:1253.50px;" width="47" height="47" viewBox="0 0 24 24"><path fill="#84cc16" d="M19 13h-6v6h-2v-6H5v-2h6V5h2v6h6v2z"/></svg>
<div class="row" style="left:1909.7px;top:1351.0px"></div>
<div class="ib ur" style="left:1915.7px;top:1358.0px"></div>
<svg class="ab" style="left:1926.7px;top:1378.5px" width="32" height="32" viewBox="0 0 32 32"><rect width="32" height="32" fill="#fff"/><g transform="translate(0.5,0.70) scale(1.29)"><path fill="#24292f" d="M12 .297c-6.63 0-12 5.37-12 12 0 5.30 3.43 9.80 8.20 11.38.600.11.820-.258.82-.577 0-.285-.010-1.04-.015-2.04-3.33.724-4.04-1.61-4.04-1.61C4.42 18.07 3.63 17.70 3.63 17.70c-1.08-.744.08-.729.08-.729 1.20.084 1.83 1.23 1.83 1.23 1.07 1.83 2.80 1.30 3.49.998.10-.776.41-1.30.760-1.60-2.66-.300-5.46-1.33-5.46-5.93 0-1.31.465-2.38 1.23-3.22-.135-.303-.540-1.52.105-3.17 0 0 1.00-.322 3.30 1.23.960-.267 1.98-.399 3-.405 1.02.006 2.04.138 3 .405 2.28-1.55 3.28-1.23 3.28-1.23.645 1.65.240 2.87.120 3.17.765.84 1.23 1.91 1.23 3.22 0 4.61-2.80 5.62-5.47 5.92.420.36.810 1.09.810 2.22 0 1.60-.015 2.89-.015 3.28 0 .315.21.690.82.570C20.56 22.09 24 17.59 24 12.29c0-6.62-5.37-12-12-12"/></g></svg>
<div class="rl" style="left:2003.2px;top:1351.0px"><span class="l" style="width:62.30px;transform:scaleX(1.08)">github</span></div>
<div class="cb" style="left:2415.2px;top:1366.9px;width:55px;height:55px;background:#efeff1"></div>
<svg class="ab" style="left:2424.20px;top:1376.70px;" width="37" height="37" viewBox="0 0 24 24"><path fill="#757575" d="M19 3h-4.18C14.40 1.84 13.30 1 12 1S9.60 1.84 9.18 3H5c-1.10 0-2 .900-2 2v14c0 1.10.900 2 2 2h14c1.10 0 2-.900 2-2V5c0-1.10-.900-2-2-2zm-7-.250c.410 0 .750.34.750.75s-.340.75-.750.75-.750-.340-.750-.750.34-.750.75-.750zM19 19H5V5h14v14zM15.08 11.03l-2.12-2.12L7 14.86V17h2.10l5.98-5.97zM16.85 9.27c.200-.200.20-.510 0-.710l-1.41-1.41c-.200-.200-.510-.200-.710 0l-1.06 1.06 2.12 2.12 1.06-1.06z"/></svg>
<div class="cb" style="left:2475.5px;top:1364.9px;width:59px;height:59px;background:#efeff1"></div>
<svg class="ab" style="left:2484.00px;top:1374.20px;" width="42" height="42" viewBox="0 0 24 24"><path fill="#212121" d="M22 5.18L10.59 16.6l-4.24-4.24 1.41-1.41 2.83 2.83 10-10L22 5.18zM19.79 10.22c.13.57.21 1.17.21 1.78 0 4.42-3.58 8-8 8s-8-3.58-8-8 3.58-8 8-8c1.58 0 3.04.46 4.28 1.25l1.44-1.44C16.1 2.67 14.13 2 12 2 6.48 2 2 6.48 2 12s4.48 10 10 10 10-4.48 10-10c0-1.19-.22-2.33-.6-3.39l-1.61 1.61z"/></svg>
<div class="cb" style="left:2539.8px;top:1364.9px;width:59px;height:59px;background:#efeff1"></div>
<svg class="ab" style="left:2548.30px;top:1374.20px;" width="42" height="42" viewBox="0 0 24 24"><path fill="#212121" d="M3 17.25V21h3.75L17.81 9.94l-3.75-3.75L3 17.25zM20.71 7.04c.39-.39.39-1.02 0-1.41l-2.34-2.34c-.39-.39-1.02-.39-1.41 0l-1.83 1.83 3.75 3.75 1.83-1.83z"/></svg>
<div class="cb" style="left:2604.2px;top:1364.9px;width:59px;height:59px;background:#efeff1"></div>
<svg class="ab" style="left:2612.70px;top:1374.20px;" width="42" height="42" viewBox="0 0 24 24"><path fill="#212121" d="M6 19c0 1.1.9 2 2 2h8c1.1 0 2-.9 2-2V7H6v12zM19 4h-3.5l-1-1h-5l-1 1H5v2h14V4z"/></svg>
<svg class="ab" style="left:2729.70px;top:1371.00px;" width="48" height="48" viewBox="0 0 24 24"><path fill="#1c1b1f" d="M20 9H4v2h16V9zM4 15h16v-2H4v2z"/></svg>
<div class="row" style="left:1909.7px;top:1440.2px"></div>
<div class="ib ur" style="left:1915.7px;top:1447.2px"></div>
<svg class="ab" style="left:1926.7px;top:1467.7px" width="32" height="32" viewBox="0 0 32 32"><rect width="32" height="32" fill="#000"/><path fill="#fff" d="M16 8.50l8 13.50H8z"/></svg>
<div class="rl" style="left:2003.2px;top:1440.2px"><span class="l" style="width:57.10px;transform:scaleX(0.97)">Vercel</span></div>
<div class="cb" style="left:2415.2px;top:1456.1px;width:55px;height:55px;background:#efeff1"></div>
<svg class="ab" style="left:2424.20px;top:1465.90px;" width="37" height="37" viewBox="0 0 24 24"><path fill="#757575" d="M19 3h-4.18C14.40 1.84 13.30 1 12 1S9.60 1.84 9.18 3H5c-1.10 0-2 .900-2 2v14c0 1.10.900 2 2 2h14c1.10 0 2-.900 2-2V5c0-1.10-.900-2-2-2zm-7-.250c.410 0 .750.34.750.75s-.340.75-.750.75-.750-.340-.750-.750.34-.750.75-.750zM19 19H5V5h14v14zM15.08 11.03l-2.12-2.12L7 14.86V17h2.10l5.98-5.97zM16.85 9.27c.200-.200.20-.510 0-.710l-1.41-1.41c-.200-.200-.510-.200-.710 0l-1.06 1.06 2.12 2.12 1.06-1.06z"/></svg>
<div class="cb" style="left:2475.5px;top:1454.1px;width:59px;height:59px;background:#efeff1"></div>
<svg class="ab" style="left:2484.00px;top:1463.40px;" width="42" height="42" viewBox="0 0 24 24"><path fill="#212121" d="M22 5.18L10.59 16.6l-4.24-4.24 1.41-1.41 2.83 2.83 10-10L22 5.18zM19.79 10.22c.13.57.21 1.17.21 1.78 0 4.42-3.58 8-8 8s-8-3.58-8-8 3.58-8 8-8c1.58 0 3.04.46 4.28 1.25l1.44-1.44C16.1 2.67 14.13 2 12 2 6.48 2 2 6.48 2 12s4.48 10 10 10 10-4.48 10-10c0-1.19-.22-2.33-.6-3.39l-1.61 1.61z"/></svg>
<div class="cb" style="left:2539.8px;top:1454.1px;width:59px;height:59px;background:#efeff1"></div>
<svg class="ab" style="left:2548.30px;top:1463.40px;" width="42" height="42" viewBox="0 0 24 24"><path fill="#212121" d="M3 17.25V21h3.75L17.81 9.94l-3.75-3.75L3 17.25zM20.71 7.04c.39-.39.39-1.02 0-1.41l-2.34-2.34c-.39-.39-1.02-.39-1.41 0l-1.83 1.83 3.75 3.75 1.83-1.83z"/></svg>
<div class="cb" style="left:2604.2px;top:1454.1px;width:59px;height:59px;background:#efeff1"></div>
<svg class="ab" style="left:2612.70px;top:1463.40px;" width="42" height="42" viewBox="0 0 24 24"><path fill="#212121" d="M6 19c0 1.1.9 2 2 2h8c1.1 0 2-.9 2-2V7H6v12zM19 4h-3.5l-1-1h-5l-1 1H5v2h14V4z"/></svg>
<svg class="ab" style="left:2729.70px;top:1460.20px;" width="48" height="48" viewBox="0 0 24 24"><path fill="#1c1b1f" d="M20 9H4v2h16V9zM4 15h16v-2H4v2z"/></svg>
<div class="row" style="left:1909.7px;top:1529.4px"></div>
<div class="ib ur" style="left:1915.7px;top:1536.4px"></div>
<svg class="ab" style="left:1926.7px;top:1556.9px" width="32" height="32" viewBox="0 0 32 32"><g transform="translate(2.2,2.2) scale(1.15)"><path fill="#202123" d="M22.28 9.82a5.98 5.98 0 0 0-.5157-4.91 6.04 6.04 0 0 0-6.50-2.9A6.06 6.06 0 0 0 4.98 4.18a5.98 5.98 0 0 0-3.99 2.9 6.04 6.04 0 0 0 .7427 7.09 5.98 5.98 0 0 0 .511 4.91 6.05 6.05 0 0 0 6.51 2.90A5.98 5.98 0 0 0 13.25 24a6.05 6.05 0 0 0 5.77-4.20 5.98 5.98 0 0 0 3.99-2.90 6.05 6.05 0 0 0-.7475-7.07zm-9.02 12.60a4.47 4.47 0 0 1-2.87-1.04l.1419-.0804 4.77-2.75a.7948.79 0 0 0 .3927-.6813v-6.73l2.02 1.16a.071.07 0 0 1 .038.05v5.58a4.50 4.50 0 0 1-4.49 4.49zm-9.66-4.12a4.47 4.47 0 0 1-.5346-3.01l.142.08 4.78 2.75a.7712.77 0 0 0 .7806 0l5.84-3.36v2.33a.0804.08 0 0 1-.0332.06L9.74 19.95a4.49 4.49 0 0 1-6.14-1.64zM2.34 7.89a4.48 4.48 0 0 1 2.36-1.97V11.6a.7664.76 0 0 0 .3879.67l5.81 3.35-2.02 1.16a.0757.07 0 0 1-.071 0l-4.83-2.78A4.50 4.50 0 0 1 2.34 7.87zm16.59 3.85L13.10 8.36 15.11 7.2a.0757.07 0 0 1 .071 0l4.83 2.79a4.49 4.49 0 0 1-.6765 8.10v-5.67a.79.79 0 0 0-.407-.667zm2.01-3.02l-.142-.0852-4.77-2.78a.7759.77 0 0 0-.7854 0L9.40 9.22V6.89a.0662.06 0 0 1 .0284-.0615l4.83-2.78a4.49 4.49 0 0 1 6.68 4.66zM8.30 12.86l-2.02-1.16a.0804.08 0 0 1-.038-.0567V6.07a4.49 4.49 0 0 1 7.37-3.45l-.142.08L8.70 5.45a.7948.79 0 0 0-.3927.68zm1.09-2.36l2.60-1.49 2.60 1.49v2.99l-2.59 1.49-2.60-1.49Z"/></g></svg>
<div class="rl" style="left:2003.2px;top:1529.4px"><span class="l" style="width:84.80px;transform:scaleX(0.95)">chat&nbsp;GPT</span></div>
<div class="cb" style="left:2415.2px;top:1545.3px;width:55px;height:55px;background:#efeff1"></div>
<svg class="ab" style="left:2424.20px;top:1555.10px;" width="37" height="37" viewBox="0 0 24 24"><path fill="#757575" d="M19 3h-4.18C14.40 1.84 13.30 1 12 1S9.60 1.84 9.18 3H5c-1.10 0-2 .900-2 2v14c0 1.10.900 2 2 2h14c1.10 0 2-.900 2-2V5c0-1.10-.900-2-2-2zm-7-.250c.410 0 .750.34.750.75s-.340.75-.750.75-.750-.340-.750-.750.34-.750.75-.750zM19 19H5V5h14v14zM15.08 11.03l-2.12-2.12L7 14.86V17h2.10l5.98-5.97zM16.85 9.27c.200-.200.20-.510 0-.710l-1.41-1.41c-.200-.200-.510-.200-.710 0l-1.06 1.06 2.12 2.12 1.06-1.06z"/></svg>
<div class="cb" style="left:2475.5px;top:1543.3px;width:59px;height:59px;background:#efeff1"></div>
<svg class="ab" style="left:2484.00px;top:1552.60px;" width="42" height="42" viewBox="0 0 24 24"><path fill="#212121" d="M22 5.18L10.59 16.6l-4.24-4.24 1.41-1.41 2.83 2.83 10-10L22 5.18zM19.79 10.22c.13.57.21 1.17.21 1.78 0 4.42-3.58 8-8 8s-8-3.58-8-8 3.58-8 8-8c1.58 0 3.04.46 4.28 1.25l1.44-1.44C16.1 2.67 14.13 2 12 2 6.48 2 2 6.48 2 12s4.48 10 10 10 10-4.48 10-10c0-1.19-.22-2.33-.6-3.39l-1.61 1.61z"/></svg>
<div class="cb" style="left:2539.8px;top:1543.3px;width:59px;height:59px;background:#efeff1"></div>
<svg class="ab" style="left:2548.30px;top:1552.60px;" width="42" height="42" viewBox="0 0 24 24"><path fill="#212121" d="M3 17.25V21h3.75L17.81 9.94l-3.75-3.75L3 17.25zM20.71 7.04c.39-.39.39-1.02 0-1.41l-2.34-2.34c-.39-.39-1.02-.39-1.41 0l-1.83 1.83 3.75 3.75 1.83-1.83z"/></svg>
<div class="cb" style="left:2604.2px;top:1543.3px;width:59px;height:59px;background:#efeff1"></div>
<svg class="ab" style="left:2612.70px;top:1552.60px;" width="42" height="42" viewBox="0 0 24 24"><path fill="#212121" d="M6 19c0 1.1.9 2 2 2h8c1.1 0 2-.9 2-2V7H6v12zM19 4h-3.5l-1-1h-5l-1 1H5v2h14V4z"/></svg>
<div class="row" style="left:1909.7px;top:1618.6px"></div>
<div class="ib ur" style="left:1915.7px;top:1625.6px"></div>
<svg class="ab" style="left:1926.7px;top:1646.1px" width="32" height="32" viewBox="0 0 32 32"><rect width="32" height="32" rx="3" fill="#fff"/><text x="16" y="27" text-anchor="middle" font-family="Liberation Sans, sans-serif" font-weight="bold" font-size="30" fill="#222" transform="translate(16 0) scale(1.2 1) translate(-16 0)">H</text></svg>
<div class="rl" style="left:2003.2px;top:1618.6px"><span class="l" style="width:48.10px;transform:scaleX(1.00)">HafH</span></div>
<div class="cb" style="left:2415.2px;top:1634.5px;width:55px;height:55px;background:#fef1e4"></div>
<svg class="ab" style="left:2424.20px;top:1644.30px;" width="37" height="37" viewBox="0 0 24 24"><path fill="#fb8c00" d="M19 3h-4.18C14.40 1.84 13.30 1 12 1S9.60 1.84 9.18 3H5c-1.10 0-2 .900-2 2v14c0 1.10.900 2 2 2h14c1.10 0 2-.900 2-2V5c0-1.10-.900-2-2-2zm-7-.250c.410 0 .750.34.750.75s-.340.75-.750.75-.750-.340-.750-.750.34-.750.75-.750zM19 19H5V5h14v14zM15.08 11.03l-2.12-2.12L7 14.86V17h2.10l5.98-5.97zM16.85 9.27c.200-.200.20-.510 0-.710l-1.41-1.41c-.200-.200-.510-.200-.710 0l-1.06 1.06 2.12 2.12 1.06-1.06z"/></svg>
<div class="cb" style="left:2475.5px;top:1632.5px;width:59px;height:59px;background:#efeff1"></div>
<svg class="ab" style="left:2484.00px;top:1641.80px;" width="42" height="42" viewBox="0 0 24 24"><path fill="#212121" d="M22 5.18L10.59 16.6l-4.24-4.24 1.41-1.41 2.83 2.83 10-10L22 5.18zM19.79 10.22c.13.57.21 1.17.21 1.78 0 4.42-3.58 8-8 8s-8-3.58-8-8 3.58-8 8-8c1.58 0 3.04.46 4.28 1.25l1.44-1.44C16.1 2.67 14.13 2 12 2 6.48 2 2 6.48 2 12s4.48 10 10 10 10-4.48 10-10c0-1.19-.22-2.33-.6-3.39l-1.61 1.61z"/></svg>
<div class="cb" style="left:2539.8px;top:1632.5px;width:59px;height:59px;background:#efeff1"></div>
<svg class="ab" style="left:2548.30px;top:1641.80px;" width="42" height="42" viewBox="0 0 24 24"><path fill="#212121" d="M3 17.25V21h3.75L17.81 9.94l-3.75-3.75L3 17.25zM20.71 7.04c.39-.39.39-1.02 0-1.41l-2.34-2.34c-.39-.39-1.02-.39-1.41 0l-1.83 1.83 3.75 3.75 1.83-1.83z"/></svg>
<div class="cb" style="left:2604.2px;top:1632.5px;width:59px;height:59px;background:#efeff1"></div>
<svg class="ab" style="left:2612.70px;top:1641.80px;" width="42" height="42" viewBox="0 0 24 24"><path fill="#212121" d="M6 19c0 1.1.9 2 2 2h8c1.1 0 2-.9 2-2V7H6v12zM19 4h-3.5l-1-1h-5l-1 1H5v2h14V4z"/></svg>
<div class="row" style="left:1909.7px;top:1707.8px"></div>
<div class="ib fi" style="left:1915.7px;top:1714.8px"></div>
<svg class="ab" style="left:1926.7px;top:1725.5px" width="24" height="32" viewBox="0 0 384 512"><path fill="#388e3c" d="M369.90 97.90L286 14C277 5 264.80-.100 252.10-.100H48C21.50 0 0 21.50 0 48v416c0 26.50 21.50 48 48 48h288c26.50 0 48-21.50 48-48V131.90c0-12.70-5.10-25-14.10-34zM332.10 128H256V51.90l76.10 76.10zM48 464V48h160v104c0 13.30 10.70 24 24 24h104v288H48z"/><path fill="#388e3c" d="M240 40L344 144H240z"/><path d="M128 250 L256 400 M256 250 L128 400" stroke="#388e3c" stroke-width="50" stroke-linecap="round" fill="none"/></svg>
<div class="rl" style="left:2003.2px;top:1707.8px"><span class="l" style="width:188.00px;transform:scaleX(1.02)">merged_output.xlsx</span></div>
<div class="cb" style="left:2415.2px;top:1723.7px;width:55px;height:55px;background:#efeff1"></div>
<svg class="ab" style="left:2424.20px;top:1733.50px;" width="37" height="37" viewBox="0 0 24 24"><path fill="#757575" d="M19 3h-4.18C14.40 1.84 13.30 1 12 1S9.60 1.84 9.18 3H5c-1.10 0-2 .900-2 2v14c0 1.10.900 2 2 2h14c1.10 0 2-.900 2-2V5c0-1.10-.900-2-2-2zm-7-.250c.410 0 .750.34.750.75s-.340.75-.750.75-.750-.340-.750-.750.34-.750.75-.750zM19 19H5V5h14v14zM15.08 11.03l-2.12-2.12L7 14.86V17h2.10l5.98-5.97zM16.85 9.27c.200-.200.20-.510 0-.710l-1.41-1.41c-.200-.200-.510-.200-.710 0l-1.06 1.06 2.12 2.12 1.06-1.06z"/></svg>
<div class="cb" style="left:2475.5px;top:1721.7px;width:59px;height:59px;background:#efeff1"></div>
<svg class="ab" style="left:2484.00px;top:1731.00px;" width="42" height="42" viewBox="0 0 24 24"><path fill="#212121" d="M22 5.18L10.59 16.6l-4.24-4.24 1.41-1.41 2.83 2.83 10-10L22 5.18zM19.79 10.22c.13.57.21 1.17.21 1.78 0 4.42-3.58 8-8 8s-8-3.58-8-8 3.58-8 8-8c1.58 0 3.04.46 4.28 1.25l1.44-1.44C16.1 2.67 14.13 2 12 2 6.48 2 2 6.48 2 12s4.48 10 10 10 10-4.48 10-10c0-1.19-.22-2.33-.6-3.39l-1.61 1.61z"/></svg>
<div class="cb" style="left:2539.8px;top:1721.7px;width:59px;height:59px;background:#efeff1"></div>
<svg class="ab" style="left:2548.30px;top:1731.00px;" width="42" height="42" viewBox="0 0 24 24"><path fill="#212121" d="M3 17.25V21h3.75L17.81 9.94l-3.75-3.75L3 17.25zM20.71 7.04c.39-.39.39-1.02 0-1.41l-2.34-2.34c-.39-.39-1.02-.39-1.41 0l-1.83 1.83 3.75 3.75 1.83-1.83z"/></svg>
<div class="cb" style="left:2604.2px;top:1721.7px;width:59px;height:59px;background:#efeff1"></div>
<svg class="ab" style="left:2612.70px;top:1731.00px;" width="42" height="42" viewBox="0 0 24 24"><path fill="#212121" d="M6 19c0 1.1.9 2 2 2h8c1.1 0 2-.9 2-2V7H6v12zM19 4h-3.5l-1-1h-5l-1 1H5v2h14V4z"/></svg>
<svg class="ab" style="left:2729.70px;top:1727.80px;" width="48" height="48" viewBox="0 0 24 24"><path fill="#1c1b1f" d="M20 9H4v2h16V9zM4 15h16v-2H4v2z"/></svg>
<svg class="ab" style="left:1105px;top:1264px" width="34" height="32" viewBox="0 0 34 32"><rect x="15.5" y="8" width="17.50" height="22.50" rx="1.80" fill="#00a6ed"/><rect x="15.5" y="8" width="2.60" height="22.50" rx="1" fill="#0090d0"/><rect x="17.0" y="27.3" width="16" height="1.80" fill="#fff" opacity=".85"/><rect x="15.5" y="29" width="17.50" height="1.50" rx=".700" fill="#0b7fc0"/><rect x="7.5" y="4" width="17.50" height="22.50" rx="1.80" fill="#ca0b4a"/><rect x="7.5" y="4" width="2.60" height="22.50" rx="1" fill="#a80b40"/><rect x="9.0" y="23.3" width="16" height="1.80" fill="#fff" opacity=".85"/><rect x="7.5" y="25" width="17.50" height="1.50" rx=".700" fill="#9c0a3b"/><rect x="0.5" y="0.5" width="17.50" height="22.50" rx="1.80" fill="#83d52b"/><rect x="0.5" y="0.5" width="2.60" height="22.50" rx="1" fill="#3f9a2a"/><rect x="2.0" y="19.8" width="16" height="1.80" fill="#fff" opacity=".85"/><rect x="0.5" y="21.5" width="17.50" height="1.50" rx=".700" fill="#1f9a78"/></svg>
<div class="fab" style="top:1541px"></div><div class="fab" style="top:1645px"></div>
<div class="ab" style="left:2738px;top:1569.50px;width:32px;height:4px;background:#2a20a6"></div><div class="ab" style="left:2738px;top:1577.50px;width:32px;height:4px;background:#2a20a6"></div>
<div class="ab" style="left:2738px;top:1658.50px;width:32px;height:4px;background:#2a20a6"></div><div class="ab" style="left:2738px;top:1666.50px;width:32px;height:4px;background:#2a20a6"></div>
<svg class="ab" style="left:2734.00px;top:1561.00px;" width="40" height="40" viewBox="0 0 24 24"><path fill="#fff" d="M8 11h3v10h2V11h3l-4-4-4 4zM4 3v2h16V3H4z"/></svg><svg class="ab" style="left:2734.00px;top:1665.00px;" width="40" height="40" viewBox="0 0 24 24"><path fill="#fff" d="M16 13h-3V3h-2v10H8l4 4 4-4zM4 19v2h16v-2H4z"/></svg>
</div></div></body></html>
